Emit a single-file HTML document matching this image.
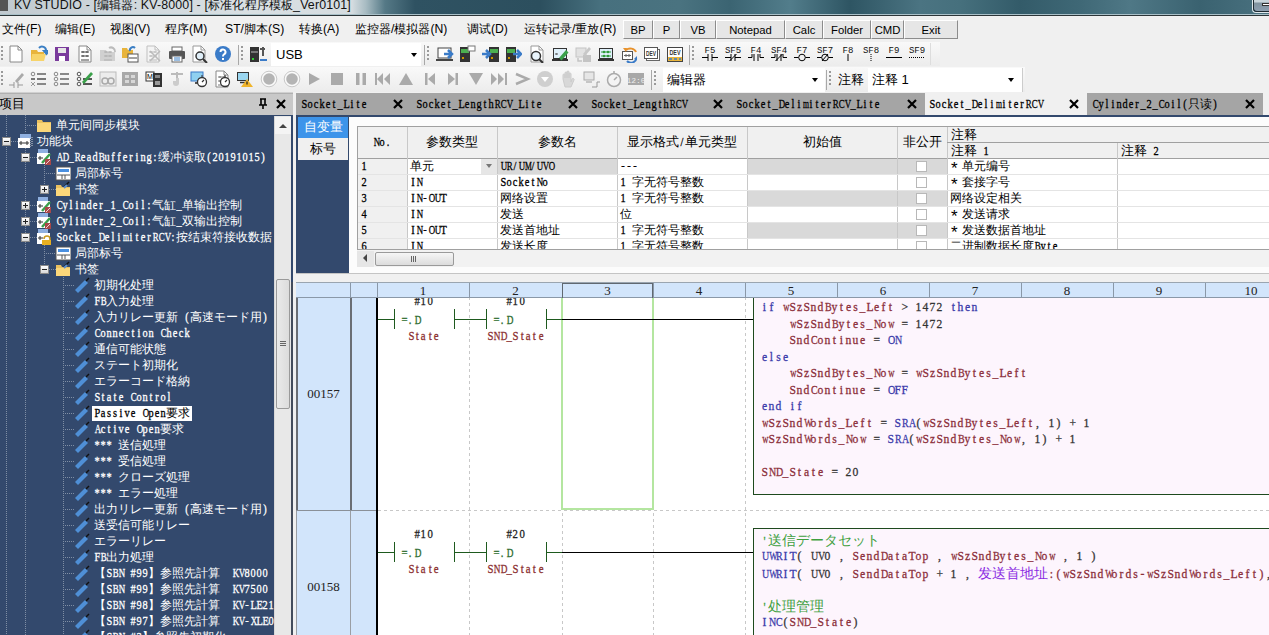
<!DOCTYPE html><html><head><meta charset="utf-8"><style>
*{box-sizing:border-box}
body{margin:0;width:1269px;height:635px;overflow:hidden;position:relative;background:#f0f0f0;font-family:"Liberation Sans",sans-serif;font-size:12px;color:#000}
.a{position:absolute}
.t{position:absolute;white-space:nowrap;line-height:1}
.m{font-family:"Liberation Mono",monospace}
.q{font-family:"Liberation Serif",serif;-webkit-text-stroke-width:0.3px}
.q i{display:inline-block;width:var(--w);text-align:center;font-style:normal;transform:scaleX(.86)}
.q i.v{transform:scaleX(.74)}
.q i.w{transform:scaleX(.64)}
</style></head><body>

<div class="a" style="left:0;top:0;width:1269px;height:15px;background:linear-gradient(90deg,#c0c9cf 0,#cfd7dc 120px,#d9e0e3 250px,#d5dce0 352px,#a7bbc2 366px,#557986 385px,#2f5262 415px,#2c4f5e 540px,#47707e 600px,#4a7380 680px,#3b6472 730px,#527d8b 790px,#2e5563 850px,#4b7482 920px,#46707d 960px,#335b69 1020px,#3f6876 1080px,#4f7886 1130px,#3a6270 1200px,#4a7280 1269px)"></div>
<div class="a" style="left:0;top:14px;width:1269px;height:1px;background:#a9c0c8"></div>
<div class="a" style="left:0;top:15px;width:1269px;height:1px;background:#2c3538"></div>
<div class="a" style="left:0;top:0;width:8px;height:11px;background:#555"></div>
<div class="t" style="left:14px;top:-1px;font-size:12.4px;letter-spacing:0.15px;color:#111">KV STUDIO - [编辑器: KV-8000] - [标准化程序模板_Ver0101]</div>
<div class="a" style="left:1252px;top:0;width:17px;height:13px;border:1px solid #dfe8ec;border-top:none;border-right:none;border-radius:0 0 0 4px"></div>
<div class="a" style="left:1253px;top:0;width:16px;height:12px;border:1px solid #1e2a30;border-top:none;border-right:none;border-radius:0 0 0 4px;background:linear-gradient(#c8d4da 0,#c8d4da 2px,#7f929e 3px,#8d9fb0 11px)"></div>
<div class="a" style="left:1262px;top:3px;width:7px;height:3px;background:#fff;border:1px solid #333;border-right:none"></div>
<div class="a" style="left:0;top:16px;width:1269px;height:26px;background:#f0f0f0"></div>
<div class="t" style="left:2px;top:23px;font-size:12.2px">文件(F)</div>
<div class="t" style="left:55px;top:23px;font-size:12.2px">编辑(E)</div>
<div class="t" style="left:110px;top:23px;font-size:12.2px">视图(V)</div>
<div class="t" style="left:165px;top:23px;font-size:12.2px">程序(M)</div>
<div class="t" style="left:225px;top:23px;font-size:12.2px">ST/脚本(S)</div>
<div class="t" style="left:299px;top:23px;font-size:12.2px">转换(A)</div>
<div class="t" style="left:355px;top:23px;font-size:12.2px">监控器/模拟器(N)</div>
<div class="t" style="left:467px;top:23px;font-size:12.2px">调试(D)</div>
<div class="t" style="left:524px;top:23px;font-size:12.2px">运转记录/重放(R)</div>
<div class="a" style="left:623px;top:20px;width:30px;height:19px;background:#e6e6e6;border:1px solid;border-color:#fff #8c8c8c #8c8c8c #fff;font-size:11.3px;text-align:center;line-height:19px">BP</div>
<div class="a" style="left:653px;top:20px;width:27px;height:19px;background:#e6e6e6;border:1px solid;border-color:#fff #8c8c8c #8c8c8c #fff;font-size:11.3px;text-align:center;line-height:19px">P</div>
<div class="a" style="left:680px;top:20px;width:36px;height:19px;background:#e6e6e6;border:1px solid;border-color:#fff #8c8c8c #8c8c8c #fff;font-size:11.3px;text-align:center;line-height:19px">VB</div>
<div class="a" style="left:716px;top:20px;width:69px;height:19px;background:#e6e6e6;border:1px solid;border-color:#fff #8c8c8c #8c8c8c #fff;font-size:11.3px;text-align:center;line-height:19px">Notepad</div>
<div class="a" style="left:785px;top:20px;width:38px;height:19px;background:#e6e6e6;border:1px solid;border-color:#fff #8c8c8c #8c8c8c #fff;font-size:11.3px;text-align:center;line-height:19px">Calc</div>
<div class="a" style="left:823px;top:20px;width:48px;height:19px;background:#e6e6e6;border:1px solid;border-color:#fff #8c8c8c #8c8c8c #fff;font-size:11.3px;text-align:center;line-height:19px">Folder</div>
<div class="a" style="left:871px;top:20px;width:33px;height:19px;background:#e6e6e6;border:1px solid;border-color:#fff #8c8c8c #8c8c8c #fff;font-size:11.3px;text-align:center;line-height:19px">CMD</div>
<div class="a" style="left:904px;top:20px;width:54px;height:19px;background:#e6e6e6;border:1px solid;border-color:#fff #8c8c8c #8c8c8c #fff;font-size:11.3px;text-align:center;line-height:19px">Exit</div>
<div class="a" style="left:0;top:42px;width:1269px;height:24px;background:#f0f0f0"></div>
<div class="a" style="left:0;top:66px;width:1269px;height:26px;background:#f0f0f0"></div>
<div class="a" style="left:0;top:42px;width:940px;height:24px;background:linear-gradient(#f9f9f9,#ececec)"></div>
<div class="a" style="left:0;top:67px;width:1025px;height:25px;background:linear-gradient(#f9f9f9,#ececec)"></div>
<div class="a" style="left:1px;top:46px;width:2px;height:16px;background:repeating-linear-gradient(#9a9a9a 0 2px,transparent 2px 4px)"></div>
<div class="a" style="left:1px;top:71px;width:2px;height:16px;background:repeating-linear-gradient(#9a9a9a 0 2px,transparent 2px 4px)"></div>
<svg class="a" style="left:7.0px;top:45.0px" width="18" height="18" viewBox="0 0 18 18"><path d="M3 1h8l4 4v12H3z" fill="#fff" stroke="#888"/><path d="M11 1v4h4" fill="none" stroke="#888"/></svg>
<svg class="a" style="left:30.0px;top:45.0px" width="18" height="18" viewBox="0 0 18 18"><path d="M1 5h6l1 2h6v9H1z" fill="#e8b43c"/><path d="M2 9h14l-2 7H1z" fill="#f7d46b"/><path d="M9 3a4 4 0 0 1 7 3l-2 0 2.5 3 2.5-3h-2" fill="none" stroke="#3b7fc4" stroke-width="2"/></svg>
<svg class="a" style="left:53.0px;top:45.0px" width="18" height="18" viewBox="0 0 18 18"><rect x="2" y="2" width="14" height="14" fill="#7a3b9c"/><rect x="5" y="3" width="8" height="5" fill="#e6e6e6"/><rect x="6" y="11" width="6" height="5" fill="#fff"/></svg>
<svg class="a" style="left:76.0px;top:45.0px" width="18" height="18" viewBox="0 0 18 18"><path d="M3 1h8l4 4v12H3z" fill="#fff" stroke="#888"/><path d="M11 1v4h4" fill="none" stroke="#888"/><path d="M5 7h8M5 11h8M5 15h8M7 6v2M11 6v2M7 10v2M11 10v2" stroke="#444" stroke-width="1" fill="none"/></svg>
<svg class="a" style="left:99.0px;top:45.0px" width="18" height="18" viewBox="0 0 18 18"><path d="M1 5h6l1 2h8v9H1z" fill="#d0d0d0"/><path d="M5 7h8M5 11h8M5 15h8M7 6v2M11 6v2M7 10v2M11 10v2" stroke="#b0b0b0" stroke-width="1" fill="none"/><path d="M10 3a4 4 0 0 1 6 4" fill="none" stroke="#bbb" stroke-width="2"/></svg>
<svg class="a" style="left:121.0px;top:45.0px" width="18" height="18" viewBox="0 0 18 18"><path d="M1 3h5l1 2h5v8H1z" fill="#e8b43c"/><rect x="7" y="9" width="10" height="8" fill="#fff" stroke="#555"/><path d="M8 13h8" stroke="#444"/><path d="M9 6a3 3 0 0 1 5-3" fill="none" stroke="#3b7fc4" stroke-width="2"/></svg>
<svg class="a" style="left:144.0px;top:45.0px" width="18" height="18" viewBox="0 0 18 18"><path d="M3 1h8l4 4v12H3z" fill="#f4f4f4" stroke="#c0c0c0"/><path d="M11 1v4h4" fill="none" stroke="#c0c0c0"/><path d="M5 7h8M5 11h8M5 15h8M7 6v2M11 6v2M7 10v2M11 10v2" stroke="#bbb" stroke-width="1" fill="none"/><path d="M6 6l10 10M16 6L6 16" stroke="#bbb" stroke-width="1.5"/></svg>
<svg class="a" style="left:168.0px;top:45.0px" width="18" height="18" viewBox="0 0 18 18"><rect x="4" y="2" width="10" height="4" fill="#fff" stroke="#666"/><rect x="1" y="6" width="16" height="8" rx="1" fill="#555"/><rect x="4" y="11" width="10" height="6" fill="#fff" stroke="#666"/><path d="M6 13h6M6 15h6" stroke="#3b7fc4"/></svg>
<svg class="a" style="left:190.0px;top:45.0px" width="18" height="18" viewBox="0 0 18 18"><path d="M3 1h8l4 4v12H3z" fill="#fff" stroke="#999"/><path d="M11 1v4h4" fill="none" stroke="#999"/><circle cx="10" cy="11" r="4" fill="#dfeef8" stroke="#333" stroke-width="1.5"/><path d="M13 14l4 4" stroke="#333" stroke-width="2"/></svg>
<svg class="a" style="left:214.0px;top:45.0px" width="18" height="18" viewBox="0 0 18 18"><circle cx="9" cy="9" r="8" fill="#3a7bc8"/><path d="M6.5 7a2.5 2.5 0 1 1 3.5 2.3c-1 .5-1 1-1 2.2" fill="none" stroke="#fff" stroke-width="2"/><rect x="8" y="13" width="2" height="2" fill="#fff"/></svg>
<div class="a" style="left:238px;top:45px;width:1px;height:20px;background:#a8a8a8"></div>
<div class="a" style="left:241px;top:46px;width:2px;height:16px;background:repeating-linear-gradient(#9a9a9a 0 2px,transparent 2px 4px)"></div>
<svg class="a" style="left:249.0px;top:45.0px" width="18" height="18" viewBox="0 0 18 18"><rect x="1" y="2" width="9" height="15" fill="#333"/><rect x="2" y="6" width="7" height="2" fill="#777"/><rect x="3" y="13" width="2" height="2" fill="#3c3"/><path d="M11 4h5M14 2v9M11 15h7" stroke="#555" stroke-width="2"/><path d="M11 15h7" stroke="#3a7bc8" stroke-width="2"/></svg>
<div class="a" style="left:271px;top:43px;width:150px;height:23px;background:#fff"></div>
<div class="t" style="left:276px;top:48px;font-size:13px">USB</div>
<div class="a" style="left:411px;top:53px;width:0;height:0;border-left:3.5px solid transparent;border-right:3.5px solid transparent;border-top:4px solid #000"></div>
<div class="a" style="left:424px;top:45px;width:1px;height:20px;background:#a8a8a8"></div>
<div class="a" style="left:427px;top:46px;width:2px;height:16px;background:repeating-linear-gradient(#9a9a9a 0 2px,transparent 2px 4px)"></div>
<svg class="a" style="left:436.0px;top:45.0px" width="18" height="18" viewBox="0 0 18 18"><rect x="2" y="3" width="13" height="10" fill="#fff" stroke="#444"/><path d="M0 15h17" stroke="#444" stroke-width="2"/><path d="M8 9h6M12 5l4 4-4 4" fill="none" stroke="#3a7bc8" stroke-width="2.5"/></svg>
<svg class="a" style="left:458.0px;top:45.0px" width="18" height="18" viewBox="0 0 18 18"><rect x="2" y="2" width="10" height="15" fill="#333"/><rect x="3" y="4" width="8" height="4" fill="#4caf50"/><rect x="4" y="12" width="2" height="2" fill="#c90"/><rect x="10" y="1" width="7" height="5" fill="#fff" stroke="#777"/></svg>
<svg class="a" style="left:482.0px;top:45.0px" width="18" height="18" viewBox="0 0 18 18"><rect x="7" y="2" width="10" height="15" fill="#333"/><rect x="8" y="4" width="8" height="4" fill="#4caf50"/><rect x="9" y="12" width="2" height="2" fill="#c90"/><path d="M0 9h6M4 5l4 4-4 4" fill="none" stroke="#3a7bc8" stroke-width="2.5"/></svg>
<svg class="a" style="left:504.0px;top:45.0px" width="18" height="18" viewBox="0 0 18 18"><rect x="2" y="2" width="10" height="15" fill="#333"/><rect x="3" y="4" width="8" height="4" fill="#4caf50"/><rect x="4" y="12" width="2" height="2" fill="#c90"/><path d="M9 9h6M13 5l4 4-4 4" fill="none" stroke="#3a7bc8" stroke-width="2.5"/></svg>
<svg class="a" style="left:528.0px;top:45.0px" width="18" height="18" viewBox="0 0 18 18"><path d="M3 1h8l4 4v12H3z" fill="#fff" stroke="#999"/><path d="M11 1v4h4" fill="none" stroke="#999"/><circle cx="8" cy="11" r="4.5" fill="#e9f4fb" stroke="#333" stroke-width="1.5"/><path d="M11 14l4 4" stroke="#333" stroke-width="2"/></svg>
<svg class="a" style="left:551.0px;top:45.0px" width="18" height="18" viewBox="0 0 18 18"><rect x="2.5" y="3.5" width="13" height="10" fill="#dff0fa" stroke="#333"/><rect x="1" y="14" width="16" height="2" fill="#333"/><path d="M5 9h2M5 8v2" stroke="#555"/><path d="M8 13l7-8 2.5 2.5-7 8z" fill="#3aa04a"/><path d="M8 13l-1 2 2-1z" fill="#222"/></svg>
<svg class="a" style="left:574.0px;top:45.0px" width="18" height="18" viewBox="0 0 18 18"><rect x="2" y="3" width="10" height="9" fill="#e2e2e2" stroke="#c4c4c4"/><path d="M4 13v3h4" fill="none" stroke="#c4c4c4" stroke-width="1.5"/><rect x="9" y="10" width="8" height="7" fill="#c4c4c4"/><path d="M9 9l6-7 2 2-6 7z" fill="#c8c8c8"/></svg>
<svg class="a" style="left:597.0px;top:45.0px" width="18" height="18" viewBox="0 0 18 18"><rect x="2.5" y="3.5" width="13" height="10" fill="#dff0fa" stroke="#333"/><rect x="1" y="14" width="16" height="2" fill="#333"/><path d="M4 7h10M4 11h10" stroke="#2e9a3a" stroke-width="1.2"/><circle cx="7" cy="7" r="1.3" fill="#2e9a3a"/><circle cx="11" cy="7" r="1.3" fill="#2e9a3a"/><circle cx="7" cy="11" r="1.3" fill="#2e9a3a"/><circle cx="11" cy="11" r="1.3" fill="#2e9a3a"/></svg>
<svg class="a" style="left:620.0px;top:45.0px" width="18" height="18" viewBox="0 0 18 18"><rect x="2.5" y="6.5" width="10" height="8" fill="#fff" stroke="#555"/><path d="M4 10.5h7M6 9v3M9 9v3" stroke="#666"/><path d="M6 5a6 5 0 0 1 10 2" fill="none" stroke="#e8922c" stroke-width="2"/><path d="M3 3l4 0-1 4z" fill="#e8922c"/><path d="M7 16a5 4 0 0 0 9-3" fill="none" stroke="#3a7bc8" stroke-width="2"/><path d="M17 11l-3 3 3 1z" fill="#3a7bc8"/></svg>
<svg class="a" style="left:643.0px;top:45.0px" width="18" height="18" viewBox="0 0 18 18"><rect x="3.5" y="4.5" width="13" height="11" fill="#fff" stroke="#666"/><rect x="1.5" y="2.5" width="13" height="11" fill="#fff" stroke="#555"/><text x="8" y="10.5" font-size="6.5" text-anchor="middle" textLength="10" lengthAdjust="spacingAndGlyphs" font-family="Liberation Sans" font-weight="bold" fill="#333">DEV</text></svg>
<svg class="a" style="left:666.0px;top:45.0px" width="18" height="18" viewBox="0 0 18 18"><rect x="1.5" y="2.5" width="15" height="14" fill="#fff" stroke="#444"/><rect x="2" y="12" width="14" height="4" fill="#e8b43c"/><path d="M3 14h3M8 14h3M13 14h2" stroke="#3a7bc8" stroke-width="1.5"/><text x="9" y="9.5" font-size="6.5" text-anchor="middle" textLength="11" lengthAdjust="spacingAndGlyphs" font-family="Liberation Sans" font-weight="bold" fill="#333">DEV</text></svg>
<div class="a" style="left:689px;top:45px;width:1px;height:20px;background:#a8a8a8"></div>
<div class="a" style="left:692px;top:46px;width:2px;height:16px;background:repeating-linear-gradient(#9a9a9a 0 2px,transparent 2px 4px)"></div>
<svg class="a" style="left:701.0px;top:45.0px" width="18" height="20" viewBox="0 0 18 20"><text x="9" y="8" font-size="9" text-anchor="middle" font-family="Liberation Mono" fill="#111">F5</text><path d="M1 12.5h6M7 9v7M11 9v7M11 12.5h6" stroke="#000"/></svg>
<svg class="a" style="left:724.0px;top:45.0px" width="18" height="20" viewBox="0 0 18 20"><text x="9" y="8" font-size="9" text-anchor="middle" font-family="Liberation Mono" fill="#111">SF5</text><path d="M1 12.5h6M7 9v7M11 9v7M11 12.5h6M5.5 16l7-7" stroke="#000"/></svg>
<svg class="a" style="left:747.0px;top:45.0px" width="18" height="20" viewBox="0 0 18 20"><text x="9" y="8" font-size="9" text-anchor="middle" font-family="Liberation Mono" fill="#111">F4</text><path d="M1 12.5h4M5 9v3.5M7 9v7M11 9v7M13 9v3.5M13 12.5h4" stroke="#000"/></svg>
<svg class="a" style="left:770.0px;top:45.0px" width="18" height="20" viewBox="0 0 18 20"><text x="9" y="8" font-size="9" text-anchor="middle" font-family="Liberation Mono" fill="#111">SF4</text><path d="M1 12.5h4M5 9v3.5M7 9v7M11 9v7M13 9v3.5M13 12.5h4M5.5 16l7-7" stroke="#000"/></svg>
<svg class="a" style="left:793.0px;top:45.0px" width="18" height="20" viewBox="0 0 18 20"><text x="9" y="8" font-size="9" text-anchor="middle" font-family="Liberation Mono" fill="#111">F7</text><path d="M1 12.5h4.5M12.5 12.5h4.5" stroke="#000"/><circle cx="9" cy="12.5" r="3.3" fill="none" stroke="#000"/></svg>
<svg class="a" style="left:816.0px;top:45.0px" width="18" height="20" viewBox="0 0 18 20"><text x="9" y="8" font-size="9" text-anchor="middle" font-family="Liberation Mono" fill="#111">SF7</text><path d="M1 12.5h4.5M12.5 12.5h4.5M6 16l6-7" stroke="#000"/><circle cx="9" cy="12.5" r="3.3" fill="none" stroke="#000"/></svg>
<svg class="a" style="left:839.0px;top:45.0px" width="18" height="20" viewBox="0 0 18 20"><text x="9" y="8" font-size="9" text-anchor="middle" font-family="Liberation Mono" fill="#111">F8</text><path d="M9 9v7" stroke="#000"/></svg>
<svg class="a" style="left:862.0px;top:45.0px" width="18" height="20" viewBox="0 0 18 20"><text x="9" y="8" font-size="9" text-anchor="middle" font-family="Liberation Mono" fill="#111">SF8</text><path d="M9 9v7" stroke="#000" stroke-dasharray="1 1"/></svg>
<svg class="a" style="left:885.0px;top:45.0px" width="18" height="20" viewBox="0 0 18 20"><text x="9" y="8" font-size="9" text-anchor="middle" font-family="Liberation Mono" fill="#111">F9</text><path d="M1 12.5h16" stroke="#000"/></svg>
<svg class="a" style="left:908.0px;top:45.0px" width="18" height="20" viewBox="0 0 18 20"><text x="9" y="8" font-size="9" text-anchor="middle" font-family="Liberation Mono" fill="#111">SF9</text><path d="M1 12.5h16" stroke="#000" stroke-dasharray="1 1"/></svg>
<div class="a" style="left:930px;top:43px;width:1px;height:22px;background:#ddd"></div>
<svg class="a" style="left:7.0px;top:70.0px" width="18" height="18" viewBox="0 0 18 18"><path d="M2 15h5M7 12v6M11 12v6M11 15h5" stroke="#999"/><path d="M8 11l7-8 2 2-7 8z" fill="#aaa"/></svg>
<svg class="a" style="left:30.0px;top:70.0px" width="18" height="18" viewBox="0 0 18 18"><circle cx="3" cy="4" r="1.8" fill="none" stroke="#888"/><path d="M7 4h9" stroke="#888" stroke-width="2"/><path d="M1 9h4M7 9h9" stroke="#777" stroke-width="2"/><path d="M1 12l4 4M5 12l-4 4" stroke="#999"/><path d="M7 14h9" stroke="#888" stroke-width="2"/></svg>
<svg class="a" style="left:53.0px;top:70.0px" width="18" height="18" viewBox="0 0 18 18"><circle cx="3" cy="4" r="1.8" fill="none" stroke="#888"/><path d="M7 4h9" stroke="#888" stroke-width="2"/><circle cx="3" cy="9" r="1.8" fill="none" stroke="#888"/><path d="M7 9h9" stroke="#888" stroke-width="2"/><circle cx="3" cy="14" r="1.8" fill="none" stroke="#888"/><path d="M7 14h9" stroke="#888" stroke-width="2"/></svg>
<svg class="a" style="left:76.0px;top:70.0px" width="18" height="18" viewBox="0 0 18 18"><circle cx="3" cy="4" r="1.8" fill="none" stroke="#555"/><circle cx="3" cy="9" r="1.8" fill="none" stroke="#555"/><circle cx="3" cy="14" r="1.8" fill="none" stroke="#555"/><path d="M7 9h9M7 14h9" stroke="#555" stroke-width="2"/><path d="M6 12l9-10 2 2-9 10z" fill="#3aa04a"/></svg>
<svg class="a" style="left:99.0px;top:70.0px" width="18" height="18" viewBox="0 0 18 18"><rect x="1" y="2" width="16" height="14" fill="#ececec" stroke="#bbb"/><circle cx="6" cy="11" r="3" fill="none" stroke="#aaa" stroke-width="1.5"/><circle cx="12" cy="11" r="3" fill="none" stroke="#aaa" stroke-width="1.5"/></svg>
<svg class="a" style="left:121.0px;top:70.0px" width="18" height="18" viewBox="0 0 18 18"><rect x="1" y="2" width="16" height="14" fill="#a8a8a8"/><path d="M4 5h4v3H4zM10 5h4v3h-4zM4 10h4v3H4zM10 10h4v3h-4z" fill="#d8d8d8"/></svg>
<svg class="a" style="left:145.0px;top:70.0px" width="18" height="18" viewBox="0 0 18 18"><rect x="1" y="2" width="8" height="9" fill="#fff" stroke="#333"/><text x="5" y="9" font-size="7" text-anchor="middle" font-family="Liberation Sans">M</text><rect x="8" y="3" width="9" height="14" fill="#333"/><rect x="10" y="5" width="5" height="3" fill="#888"/><rect x="10" y="11" width="5" height="4" fill="#999"/></svg>
<svg class="a" style="left:168.0px;top:70.0px" width="18" height="18" viewBox="0 0 18 18"><path d="M3 4h12M9 2v6" stroke="#bbb" stroke-width="2"/><path d="M8 8h3v5a3 3 0 0 1-6 0v-2h3z" fill="#ccc"/></svg>
<svg class="a" style="left:190.0px;top:70.0px" width="18" height="18" viewBox="0 0 18 18"><rect x="1" y="2" width="12" height="9" fill="#8fd0f0" stroke="#3a7bc8"/><path d="M5 13h5" stroke="#555" stroke-width="2"/><circle cx="12" cy="12" r="4.5" fill="#fff" stroke="#333" stroke-width="1.3"/><path d="M12 12l2-2M11 6h2" stroke="#333" stroke-width="1.2"/></svg>
<svg class="a" style="left:213.0px;top:70.0px" width="18" height="18" viewBox="0 0 18 18"><path d="M3 1h8l4 4v12H3z" fill="#fff" stroke="#888"/><path d="M11 1v4h4" fill="none" stroke="#888"/><path d="M5 7h8M5 11h8M5 15h8M7 6v2M11 6v2M7 10v2M11 10v2" stroke="#777" stroke-width="1" fill="none"/><circle cx="12" cy="12" r="4.5" fill="#fff" stroke="#333" stroke-width="1.3"/><path d="M12 12l2-2M11 6h2" stroke="#333" stroke-width="1.2"/></svg>
<svg class="a" style="left:236.0px;top:70.0px" width="18" height="18" viewBox="0 0 18 18"><rect x="1.5" y="2.5" width="11" height="8" fill="#9ad6f0" stroke="#333"/><path d="M4 12.5h6" stroke="#333" stroke-width="1.5"/><path d="M11 9l6 8H5z" fill="#f0b429"/><path d="M11 11.5v3" stroke="#222" stroke-width="1.2"/></svg>
<svg class="a" style="left:260.0px;top:70.0px" width="18" height="18" viewBox="0 0 18 18"><circle cx="9" cy="9" r="7.8" fill="#fafafa" stroke="#c8c8c8" stroke-width="1"/><circle cx="9" cy="9" r="5.8" fill="#b4b4b4"/></svg>
<svg class="a" style="left:283.0px;top:70.0px" width="18" height="18" viewBox="0 0 18 18"><circle cx="9" cy="9" r="7.8" fill="#fafafa" stroke="#c8c8c8" stroke-width="1"/><circle cx="9" cy="9" r="5.8" fill="#b4b4b4"/></svg>
<svg class="a" style="left:305.0px;top:70.0px" width="18" height="18" viewBox="0 0 18 18"><path d="M4 3l11 6-11 6z" fill="#aaa"/></svg>
<svg class="a" style="left:328.0px;top:70.0px" width="18" height="18" viewBox="0 0 18 18"><rect x="3" y="3" width="12" height="12" fill="#aaa"/></svg>
<svg class="a" style="left:352.0px;top:70.0px" width="18" height="18" viewBox="0 0 18 18"><rect x="4" y="3" width="3.5" height="12" fill="#aaa"/><rect x="10.5" y="3" width="3.5" height="12" fill="#aaa"/></svg>
<svg class="a" style="left:374.0px;top:70.0px" width="18" height="18" viewBox="0 0 18 18"><rect x="1" y="3" width="2" height="12" fill="#aaa"/><path d="M9 3L3 9l6 6zM16 3l-6 6 6 6z" fill="#aaa"/></svg>
<svg class="a" style="left:397.0px;top:70.0px" width="18" height="18" viewBox="0 0 18 18"><path d="M9 3l7 12H2z" fill="#aaa"/></svg>
<svg class="a" style="left:421.0px;top:70.0px" width="18" height="18" viewBox="0 0 18 18"><rect x="4" y="3" width="2.5" height="12" fill="#aaa"/><path d="M14 3L7 9l7 6z" fill="#aaa"/></svg>
<svg class="a" style="left:444.0px;top:70.0px" width="18" height="18" viewBox="0 0 18 18"><rect x="11.5" y="3" width="2.5" height="12" fill="#aaa"/><path d="M4 3l7 6-7 6z" fill="#aaa"/></svg>
<svg class="a" style="left:467.0px;top:70.0px" width="18" height="18" viewBox="0 0 18 18"><path d="M2 3h14L9 15z" fill="#aaa"/></svg>
<svg class="a" style="left:490.0px;top:70.0px" width="18" height="18" viewBox="0 0 18 18"><rect x="15" y="3" width="2" height="12" fill="#aaa"/><path d="M1 3l6 6-6 6zM8 3l6 6-6 6z" fill="#aaa"/></svg>
<svg class="a" style="left:513.0px;top:70.0px" width="18" height="18" viewBox="0 0 18 18"><path d="M3 4l12 5-12 5" fill="none" stroke="#aaa" stroke-width="2.5"/></svg>
<svg class="a" style="left:536.0px;top:70.0px" width="18" height="18" viewBox="0 0 18 18"><circle cx="9" cy="9" r="8" fill="#cfcfcf"/><path d="M5 7h8l-4 5z" fill="#fff"/></svg>
<svg class="a" style="left:559.0px;top:70.0px" width="18" height="18" viewBox="0 0 18 18"><path d="M4 9V5a1 1 0 0 1 2 0v3V3a1 1 0 0 1 2 0v5V2a1 1 0 0 1 2 0v6V4a1 1 0 0 1 2 0v8l1-3a1 1 0 0 1 2 1l-3 7H6z" fill="#d8d8d8" stroke="#ccc"/></svg>
<svg class="a" style="left:582.0px;top:70.0px" width="18" height="18" viewBox="0 0 18 18"><rect x="2" y="2" width="10" height="8" fill="#e6e6e6" stroke="#aaa"/><path d="M4 12h6M10 17h5v-5h3" stroke="#999" fill="none"/></svg>
<svg class="a" style="left:605.0px;top:70.0px" width="18" height="18" viewBox="0 0 18 18"><circle cx="9" cy="10" r="6.5" fill="#f4f4f4" stroke="#aaa" stroke-width="1.5"/><path d="M9 10l3-3M8 2h2" stroke="#aaa" stroke-width="1.5"/></svg>
<svg class="a" style="left:627.0px;top:70.0px" width="18" height="18" viewBox="0 0 18 18"><rect x="1" y="3" width="16" height="12" fill="#a8a8a8"/><text x="9" y="12.5" font-size="8" text-anchor="middle" fill="#eee" font-family="Liberation Mono">12:0</text></svg>
<div class="a" style="left:651px;top:70px;width:1px;height:20px;background:#a8a8a8"></div>
<div class="a" style="left:654px;top:71px;width:2px;height:16px;background:repeating-linear-gradient(#9a9a9a 0 2px,transparent 2px 4px)"></div>
<div class="a" style="left:663px;top:68px;width:162px;height:24px;background:#fff"></div>
<div class="t" style="left:667px;top:73px;font-size:13px">编辑器</div>
<div class="a" style="left:812px;top:78px;width:0;height:0;border-left:3.5px solid transparent;border-right:3.5px solid transparent;border-top:4px solid #000"></div>
<div class="a" style="left:826px;top:70px;width:1px;height:20px;background:#a8a8a8"></div>
<div class="a" style="left:829px;top:71px;width:2px;height:16px;background:repeating-linear-gradient(#9a9a9a 0 2px,transparent 2px 4px)"></div>
<div class="t" style="left:838px;top:73px;font-size:13px">注释</div>
<div class="a" style="left:868px;top:68px;width:154px;height:24px;background:#fff"></div>
<div class="t" style="left:872px;top:73px;font-size:13px">注释 1</div>
<div class="a" style="left:1008px;top:78px;width:0;height:0;border-left:3.5px solid transparent;border-right:3.5px solid transparent;border-top:4px solid #000"></div>
<div class="a" style="left:1022px;top:68px;width:1px;height:24px;background:#ccc"></div>
<div class="a" style="left:0;top:92px;width:293px;height:1px;background:#d0d0d0"></div>
<div class="a" style="left:0;top:93px;width:293px;height:22px;background:#c8c8c8;border-top:1px solid #b0b0b0"></div>
<div class="t" style="left:-1px;top:98px;font-size:12.5px">项目</div>
<svg class="a" style="left:257.0px;top:97.0px" width="12" height="14" viewBox="0 0 12 14"><path d="M3 2h6M4 2v6M8 2v6M2 8h8M6 8v4" stroke="#000" stroke-width="1.6" fill="none"/></svg>
<svg class="a" style="left:275.0px;top:98.0px" width="12" height="12" viewBox="0 0 12 12"><path d="M2 2l8 8M10 2l-8 8" stroke="#000" stroke-width="2.2"/></svg>
<div class="a" style="left:0;top:115px;width:293px;height:520px;background:#33496d;overflow:hidden">
<div class="a" style="left:6px;top:0px;width:1px;height:520px;background:repeating-linear-gradient(#7f8ea4 0 1px,transparent 1px 2px)"></div>
<div class="a" style="left:25px;top:0px;width:1px;height:18px;background:repeating-linear-gradient(#7f8ea4 0 1px,transparent 1px 2px)"></div>
<div class="a" style="left:25px;top:31px;width:1px;height:489px;background:repeating-linear-gradient(#7f8ea4 0 1px,transparent 1px 2px)"></div>
<div class="a" style="left:44px;top:48px;width:1px;height:27px;background:repeating-linear-gradient(#7f8ea4 0 1px,transparent 1px 2px)"></div>
<div class="a" style="left:44px;top:128px;width:1px;height:27px;background:repeating-linear-gradient(#7f8ea4 0 1px,transparent 1px 2px)"></div>
<div class="a" style="left:63px;top:160px;width:1px;height:360px;background:repeating-linear-gradient(#7f8ea4 0 1px,transparent 1px 2px)"></div>
<div class="a" style="left:25px;top:10px;width:12px;height:1px;background:repeating-linear-gradient(90deg,#7f8ea4 0 1px,transparent 1px 2px)"></div>
<svg class="a" style="left:36px;top:2px" width="16" height="16" viewBox="0 0 16 16"><path d="M1 3h5l1 2h8v10H1z" fill="#e9c060"/><path d="M1 6h14v9H1z" fill="#fbd77a"/></svg>
<div class="t" style="left:56px;top:3px;height:15px;line-height:15px;color:#fff;"><span style="font-size:12px">单元间同步模块</span></div>
<div class="a" style="left:11px;top:26px;width:7px;height:1px;background:repeating-linear-gradient(90deg,#7f8ea4 0 1px,transparent 1px 2px)"></div>
<div class="a" style="left:2.0px;top:21.5px;width:9px;height:9px;background:linear-gradient(#fff,#d8d8d8);border:1px solid #8a8a8a"></div>
<div class="a" style="left:4.0px;top:25.5px;width:5px;height:1px;background:#222"></div>
<svg class="a" style="left:17px;top:18px" width="16" height="16" viewBox="0 0 16 16"><rect x="3" y="1" width="11" height="5" fill="#8fb0e0"/><rect x="1" y="5" width="12" height="10" fill="#fff"/><path d="M2 10h10M4 8v4M10 8v4" stroke="#333"/><path d="M13 5v10M15 4v10" stroke="#ddd" stroke-dasharray="1 1"/></svg>
<div class="t" style="left:37px;top:19px;height:15px;line-height:15px;color:#fff;"><span style="font-size:12px">功能块</span></div>
<div class="a" style="left:30px;top:42px;width:7px;height:1px;background:repeating-linear-gradient(90deg,#7f8ea4 0 1px,transparent 1px 2px)"></div>
<div class="a" style="left:21.0px;top:37.5px;width:9px;height:9px;background:linear-gradient(#fff,#d8d8d8);border:1px solid #8a8a8a"></div>
<div class="a" style="left:23.0px;top:41.5px;width:5px;height:1px;background:#222"></div>
<svg class="a" style="left:36px;top:34px" width="16" height="16" viewBox="0 0 16 16"><rect x="2" y="0" width="10" height="5" fill="#8fb0e0"/><rect x="1" y="4" width="13" height="11" fill="#fff"/><path d="M2 9h5M4 7v4" stroke="#333"/><path d="M6 14l8-9" stroke="#3aa04a" stroke-width="2.5"/><rect x="9" y="10" width="6" height="6" fill="#a84848"/><path d="M10 15l4-4" stroke="#f0d0d0"/></svg>
<div class="t" style="left:56px;top:35px;height:15px;line-height:15px;color:#fff;"><span class="q" style="font-size:12px;--w:6.0px"><i class="v">A</i><i class="v">D</i><i>_</i><i class="v">R</i><i>e</i><i>a</i><i>d</i><i class="v">B</i><i>u</i><i>f</i><i>f</i><i>e</i><i>r</i><i>i</i><i>n</i><i>g</i><i>:</i></span><span style="font-size:12px">缓冲读取</span><span class="q" style="font-size:12px;--w:6.0px"><i>(</i><i>2</i><i>0</i><i>1</i><i>9</i><i>1</i><i>0</i><i>1</i><i>5</i><i>)</i></span></div>
<div class="a" style="left:44px;top:58px;width:12px;height:1px;background:repeating-linear-gradient(90deg,#7f8ea4 0 1px,transparent 1px 2px)"></div>
<svg class="a" style="left:55px;top:50px" width="16" height="16" viewBox="0 0 16 16"><rect x="1" y="2" width="15" height="13" fill="#fff" stroke="#555"/><rect x="3" y="4" width="11" height="3" fill="#4a90e0"/><path d="M2 10h13M7 10v4M10 10v4" stroke="#555"/></svg>
<div class="t" style="left:75px;top:51px;height:15px;line-height:15px;color:#fff;"><span style="font-size:12px">局部标号</span></div>
<div class="a" style="left:49px;top:74px;width:7px;height:1px;background:repeating-linear-gradient(90deg,#7f8ea4 0 1px,transparent 1px 2px)"></div>
<div class="a" style="left:40.0px;top:69.5px;width:9px;height:9px;background:linear-gradient(#fff,#d8d8d8);border:1px solid #8a8a8a"></div>
<div class="a" style="left:42.0px;top:73.5px;width:5px;height:1px;background:#222"></div>
<div class="a" style="left:44.0px;top:71.5px;width:1px;height:5px;background:#222"></div>
<svg class="a" style="left:55px;top:66px" width="16" height="16" viewBox="0 0 16 16"><path d="M1 4h5l1 2h8v9H1z" fill="#e9c060"/><path d="M1 7h14v8H1z" fill="#fbd77a"/><path d="M9 6l5-5" stroke="#111" stroke-width="1.5"/><path d="M9 7l3-3" stroke="#5b8fd0" stroke-width="2"/></svg>
<div class="t" style="left:75px;top:67px;height:15px;line-height:15px;color:#fff;"><span style="font-size:12px">书签</span></div>
<div class="a" style="left:30px;top:90px;width:7px;height:1px;background:repeating-linear-gradient(90deg,#7f8ea4 0 1px,transparent 1px 2px)"></div>
<div class="a" style="left:21.0px;top:85.5px;width:9px;height:9px;background:linear-gradient(#fff,#d8d8d8);border:1px solid #8a8a8a"></div>
<div class="a" style="left:23.0px;top:89.5px;width:5px;height:1px;background:#222"></div>
<div class="a" style="left:25.0px;top:87.5px;width:1px;height:5px;background:#222"></div>
<svg class="a" style="left:36px;top:82px" width="16" height="16" viewBox="0 0 16 16"><rect x="2" y="0" width="10" height="5" fill="#8fb0e0"/><rect x="1" y="4" width="13" height="11" fill="#fff"/><path d="M2 9h5M4 7v4" stroke="#333"/><path d="M6 14l8-9" stroke="#3aa04a" stroke-width="2.5"/><rect x="9" y="10" width="6" height="6" fill="#a84848"/><path d="M10 15l4-4" stroke="#f0d0d0"/></svg>
<div class="t" style="left:56px;top:83px;height:15px;line-height:15px;color:#fff;"><span class="q" style="font-size:12px;--w:6.0px"><i class="v">C</i><i>y</i><i>l</i><i>i</i><i>n</i><i>d</i><i>e</i><i>r</i><i>_</i><i>1</i><i>_</i><i class="v">C</i><i>o</i><i>i</i><i>l</i><i>:</i></span><span style="font-size:12px">气缸</span><span class="q" style="font-size:12px;--w:6.0px"><i>_</i></span><span style="font-size:12px">单输出控制</span></div>
<div class="a" style="left:30px;top:106px;width:7px;height:1px;background:repeating-linear-gradient(90deg,#7f8ea4 0 1px,transparent 1px 2px)"></div>
<div class="a" style="left:21.0px;top:101.5px;width:9px;height:9px;background:linear-gradient(#fff,#d8d8d8);border:1px solid #8a8a8a"></div>
<div class="a" style="left:23.0px;top:105.5px;width:5px;height:1px;background:#222"></div>
<div class="a" style="left:25.0px;top:103.5px;width:1px;height:5px;background:#222"></div>
<svg class="a" style="left:36px;top:98px" width="16" height="16" viewBox="0 0 16 16"><rect x="2" y="0" width="10" height="5" fill="#8fb0e0"/><rect x="1" y="4" width="13" height="11" fill="#fff"/><path d="M2 9h5M4 7v4" stroke="#333"/><path d="M6 14l8-9" stroke="#3aa04a" stroke-width="2.5"/><rect x="9" y="10" width="6" height="6" fill="#a84848"/><path d="M10 15l4-4" stroke="#f0d0d0"/></svg>
<div class="t" style="left:56px;top:99px;height:15px;line-height:15px;color:#fff;"><span class="q" style="font-size:12px;--w:6.0px"><i class="v">C</i><i>y</i><i>l</i><i>i</i><i>n</i><i>d</i><i>e</i><i>r</i><i>_</i><i>2</i><i>_</i><i class="v">C</i><i>o</i><i>i</i><i>l</i><i>:</i></span><span style="font-size:12px">气缸</span><span class="q" style="font-size:12px;--w:6.0px"><i>_</i></span><span style="font-size:12px">双输出控制</span></div>
<div class="a" style="left:30px;top:122px;width:7px;height:1px;background:repeating-linear-gradient(90deg,#7f8ea4 0 1px,transparent 1px 2px)"></div>
<div class="a" style="left:21.0px;top:117.5px;width:9px;height:9px;background:linear-gradient(#fff,#d8d8d8);border:1px solid #8a8a8a"></div>
<div class="a" style="left:23.0px;top:121.5px;width:5px;height:1px;background:#222"></div>
<svg class="a" style="left:36px;top:114px" width="16" height="16" viewBox="0 0 16 16"><rect x="2" y="0" width="10" height="5" fill="#8fb0e0"/><rect x="1" y="4" width="13" height="11" fill="#fff"/><path d="M2 9h5M4 7v4" stroke="#333"/><path d="M8 10a3 3 0 0 1 6 0v2" fill="none" stroke="#c89a20" stroke-width="1.5"/><rect x="6" y="11" width="9" height="5" fill="#e8b020"/></svg>
<div class="t" style="left:56px;top:115px;height:15px;line-height:15px;color:#fff;"><span class="q" style="font-size:12px;--w:6.0px"><i>S</i><i>o</i><i>c</i><i>k</i><i>e</i><i>t</i><i>_</i><i class="v">D</i><i>e</i><i>l</i><i>i</i><i class="w">m</i><i>i</i><i>t</i><i>e</i><i>r</i><i class="v">R</i><i class="v">C</i><i class="v">V</i><i>:</i></span><span style="font-size:12px">按结束符接收数据</span></div>
<div class="a" style="left:44px;top:138px;width:12px;height:1px;background:repeating-linear-gradient(90deg,#7f8ea4 0 1px,transparent 1px 2px)"></div>
<svg class="a" style="left:55px;top:130px" width="16" height="16" viewBox="0 0 16 16"><rect x="1" y="2" width="15" height="13" fill="#fff" stroke="#555"/><rect x="3" y="4" width="11" height="3" fill="#4a90e0"/><path d="M2 10h13M7 10v4M10 10v4" stroke="#555"/></svg>
<div class="t" style="left:75px;top:131px;height:15px;line-height:15px;color:#fff;"><span style="font-size:12px">局部标号</span></div>
<div class="a" style="left:49px;top:154px;width:7px;height:1px;background:repeating-linear-gradient(90deg,#7f8ea4 0 1px,transparent 1px 2px)"></div>
<div class="a" style="left:40.0px;top:149.5px;width:9px;height:9px;background:linear-gradient(#fff,#d8d8d8);border:1px solid #8a8a8a"></div>
<div class="a" style="left:42.0px;top:153.5px;width:5px;height:1px;background:#222"></div>
<svg class="a" style="left:55px;top:146px" width="16" height="16" viewBox="0 0 16 16"><path d="M1 4h5l1 2h8v9H1z" fill="#e9c060"/><path d="M1 7h14v8H1z" fill="#fbd77a"/><path d="M9 6l5-5" stroke="#111" stroke-width="1.5"/><path d="M9 7l3-3" stroke="#5b8fd0" stroke-width="2"/></svg>
<div class="t" style="left:75px;top:147px;height:15px;line-height:15px;color:#fff;"><span style="font-size:12px">书签</span></div>
<div class="a" style="left:63px;top:170px;width:12px;height:1px;background:repeating-linear-gradient(90deg,#7f8ea4 0 1px,transparent 1px 2px)"></div>
<svg class="a" style="left:74px;top:162px" width="16" height="16" viewBox="0 0 16 16"><path d="M1 13l10-10 3 3-10 10z" fill="#4f8fd6"/><path d="M12 4l3-3" stroke="#111" stroke-width="1.5"/></svg>
<div class="t" style="left:94px;top:163px;height:15px;line-height:15px;color:#fff;"><span style="font-size:12px">初期化处理</span></div>
<div class="a" style="left:63px;top:186px;width:12px;height:1px;background:repeating-linear-gradient(90deg,#7f8ea4 0 1px,transparent 1px 2px)"></div>
<svg class="a" style="left:74px;top:178px" width="16" height="16" viewBox="0 0 16 16"><path d="M1 13l10-10 3 3-10 10z" fill="#4f8fd6"/><path d="M12 4l3-3" stroke="#111" stroke-width="1.5"/></svg>
<div class="t" style="left:94px;top:179px;height:15px;line-height:15px;color:#fff;"><span class="q" style="font-size:12px;--w:6.0px"><i>F</i><i class="v">B</i></span><span style="font-size:12px">入力处理</span></div>
<div class="a" style="left:63px;top:202px;width:12px;height:1px;background:repeating-linear-gradient(90deg,#7f8ea4 0 1px,transparent 1px 2px)"></div>
<svg class="a" style="left:74px;top:194px" width="16" height="16" viewBox="0 0 16 16"><path d="M1 13l10-10 3 3-10 10z" fill="#4f8fd6"/><path d="M12 4l3-3" stroke="#111" stroke-width="1.5"/></svg>
<div class="t" style="left:94px;top:195px;height:15px;line-height:15px;color:#fff;"><span style="font-size:12px">入力リレー更新</span><span class="q" style="font-size:12px;--w:6.0px"><i>&nbsp;</i><i>(</i></span><span style="font-size:12px">高速モード用</span><span class="q" style="font-size:12px;--w:6.0px"><i>)</i></span></div>
<div class="a" style="left:63px;top:218px;width:12px;height:1px;background:repeating-linear-gradient(90deg,#7f8ea4 0 1px,transparent 1px 2px)"></div>
<svg class="a" style="left:74px;top:210px" width="16" height="16" viewBox="0 0 16 16"><path d="M1 13l10-10 3 3-10 10z" fill="#4f8fd6"/><path d="M12 4l3-3" stroke="#111" stroke-width="1.5"/></svg>
<div class="t" style="left:94px;top:211px;height:15px;line-height:15px;color:#fff;"><span class="q" style="font-size:12px;--w:6.0px"><i class="v">C</i><i>o</i><i>n</i><i>n</i><i>e</i><i>c</i><i>t</i><i>i</i><i>o</i><i>n</i><i>&nbsp;</i><i class="v">C</i><i>h</i><i>e</i><i>c</i><i>k</i></span></div>
<div class="a" style="left:63px;top:234px;width:12px;height:1px;background:repeating-linear-gradient(90deg,#7f8ea4 0 1px,transparent 1px 2px)"></div>
<svg class="a" style="left:74px;top:226px" width="16" height="16" viewBox="0 0 16 16"><path d="M1 13l10-10 3 3-10 10z" fill="#4f8fd6"/><path d="M12 4l3-3" stroke="#111" stroke-width="1.5"/></svg>
<div class="t" style="left:94px;top:227px;height:15px;line-height:15px;color:#fff;"><span style="font-size:12px">通信可能状態</span></div>
<div class="a" style="left:63px;top:250px;width:12px;height:1px;background:repeating-linear-gradient(90deg,#7f8ea4 0 1px,transparent 1px 2px)"></div>
<svg class="a" style="left:74px;top:242px" width="16" height="16" viewBox="0 0 16 16"><path d="M1 13l10-10 3 3-10 10z" fill="#4f8fd6"/><path d="M12 4l3-3" stroke="#111" stroke-width="1.5"/></svg>
<div class="t" style="left:94px;top:243px;height:15px;line-height:15px;color:#fff;"><span style="font-size:12px">ステート初期化</span></div>
<div class="a" style="left:63px;top:266px;width:12px;height:1px;background:repeating-linear-gradient(90deg,#7f8ea4 0 1px,transparent 1px 2px)"></div>
<svg class="a" style="left:74px;top:258px" width="16" height="16" viewBox="0 0 16 16"><path d="M1 13l10-10 3 3-10 10z" fill="#4f8fd6"/><path d="M12 4l3-3" stroke="#111" stroke-width="1.5"/></svg>
<div class="t" style="left:94px;top:259px;height:15px;line-height:15px;color:#fff;"><span style="font-size:12px">エラーコード格納</span></div>
<div class="a" style="left:63px;top:282px;width:12px;height:1px;background:repeating-linear-gradient(90deg,#7f8ea4 0 1px,transparent 1px 2px)"></div>
<svg class="a" style="left:74px;top:274px" width="16" height="16" viewBox="0 0 16 16"><path d="M1 13l10-10 3 3-10 10z" fill="#4f8fd6"/><path d="M12 4l3-3" stroke="#111" stroke-width="1.5"/></svg>
<div class="t" style="left:94px;top:275px;height:15px;line-height:15px;color:#fff;"><span class="q" style="font-size:12px;--w:6.0px"><i>S</i><i>t</i><i>a</i><i>t</i><i>e</i><i>&nbsp;</i><i class="v">C</i><i>o</i><i>n</i><i>t</i><i>r</i><i>o</i><i>l</i></span></div>
<div class="a" style="left:63px;top:298px;width:12px;height:1px;background:repeating-linear-gradient(90deg,#7f8ea4 0 1px,transparent 1px 2px)"></div>
<svg class="a" style="left:74px;top:290px" width="16" height="16" viewBox="0 0 16 16"><path d="M1 13l10-10 3 3-10 10z" fill="#4f8fd6"/><path d="M12 4l3-3" stroke="#111" stroke-width="1.5"/></svg>
<div class="t" style="left:94px;top:291px;height:15px;line-height:15px;background:#fff;color:#000;padding:0 2px;margin-left:-2px;"><span class="q" style="font-size:12px;--w:6.0px"><i>P</i><i>a</i><i>s</i><i>s</i><i>i</i><i>v</i><i>e</i><i>&nbsp;</i><i class="v">O</i><i>p</i><i>e</i><i>n</i></span><span style="font-size:12px">要求</span></div>
<div class="a" style="left:63px;top:314px;width:12px;height:1px;background:repeating-linear-gradient(90deg,#7f8ea4 0 1px,transparent 1px 2px)"></div>
<svg class="a" style="left:74px;top:306px" width="16" height="16" viewBox="0 0 16 16"><path d="M1 13l10-10 3 3-10 10z" fill="#4f8fd6"/><path d="M12 4l3-3" stroke="#111" stroke-width="1.5"/></svg>
<div class="t" style="left:94px;top:307px;height:15px;line-height:15px;color:#fff;"><span class="q" style="font-size:12px;--w:6.0px"><i class="v">A</i><i>c</i><i>t</i><i>i</i><i>v</i><i>e</i><i>&nbsp;</i><i class="v">O</i><i>p</i><i>e</i><i>n</i></span><span style="font-size:12px">要求</span></div>
<div class="a" style="left:63px;top:330px;width:12px;height:1px;background:repeating-linear-gradient(90deg,#7f8ea4 0 1px,transparent 1px 2px)"></div>
<svg class="a" style="left:74px;top:322px" width="16" height="16" viewBox="0 0 16 16"><path d="M1 13l10-10 3 3-10 10z" fill="#4f8fd6"/><path d="M12 4l3-3" stroke="#111" stroke-width="1.5"/></svg>
<div class="t" style="left:94px;top:323px;height:15px;line-height:15px;color:#fff;"><span class="q" style="font-size:12px;--w:6.0px"><i>*</i><i>*</i><i>*</i><i>&nbsp;</i></span><span style="font-size:12px">送信処理</span></div>
<div class="a" style="left:63px;top:346px;width:12px;height:1px;background:repeating-linear-gradient(90deg,#7f8ea4 0 1px,transparent 1px 2px)"></div>
<svg class="a" style="left:74px;top:338px" width="16" height="16" viewBox="0 0 16 16"><path d="M1 13l10-10 3 3-10 10z" fill="#4f8fd6"/><path d="M12 4l3-3" stroke="#111" stroke-width="1.5"/></svg>
<div class="t" style="left:94px;top:339px;height:15px;line-height:15px;color:#fff;"><span class="q" style="font-size:12px;--w:6.0px"><i>*</i><i>*</i><i>*</i><i>&nbsp;</i></span><span style="font-size:12px">受信処理</span></div>
<div class="a" style="left:63px;top:362px;width:12px;height:1px;background:repeating-linear-gradient(90deg,#7f8ea4 0 1px,transparent 1px 2px)"></div>
<svg class="a" style="left:74px;top:354px" width="16" height="16" viewBox="0 0 16 16"><path d="M1 13l10-10 3 3-10 10z" fill="#4f8fd6"/><path d="M12 4l3-3" stroke="#111" stroke-width="1.5"/></svg>
<div class="t" style="left:94px;top:355px;height:15px;line-height:15px;color:#fff;"><span class="q" style="font-size:12px;--w:6.0px"><i>*</i><i>*</i><i>*</i><i>&nbsp;</i></span><span style="font-size:12px">クローズ処理</span></div>
<div class="a" style="left:63px;top:378px;width:12px;height:1px;background:repeating-linear-gradient(90deg,#7f8ea4 0 1px,transparent 1px 2px)"></div>
<svg class="a" style="left:74px;top:370px" width="16" height="16" viewBox="0 0 16 16"><path d="M1 13l10-10 3 3-10 10z" fill="#4f8fd6"/><path d="M12 4l3-3" stroke="#111" stroke-width="1.5"/></svg>
<div class="t" style="left:94px;top:371px;height:15px;line-height:15px;color:#fff;"><span class="q" style="font-size:12px;--w:6.0px"><i>*</i><i>*</i><i>*</i><i>&nbsp;</i></span><span style="font-size:12px">エラー処理</span></div>
<div class="a" style="left:63px;top:394px;width:12px;height:1px;background:repeating-linear-gradient(90deg,#7f8ea4 0 1px,transparent 1px 2px)"></div>
<svg class="a" style="left:74px;top:386px" width="16" height="16" viewBox="0 0 16 16"><path d="M1 13l10-10 3 3-10 10z" fill="#4f8fd6"/><path d="M12 4l3-3" stroke="#111" stroke-width="1.5"/></svg>
<div class="t" style="left:94px;top:387px;height:15px;line-height:15px;color:#fff;"><span style="font-size:12px">出力リレー更新</span><span class="q" style="font-size:12px;--w:6.0px"><i>&nbsp;</i><i>(</i></span><span style="font-size:12px">高速モード用</span><span class="q" style="font-size:12px;--w:6.0px"><i>)</i></span></div>
<div class="a" style="left:63px;top:410px;width:12px;height:1px;background:repeating-linear-gradient(90deg,#7f8ea4 0 1px,transparent 1px 2px)"></div>
<svg class="a" style="left:74px;top:402px" width="16" height="16" viewBox="0 0 16 16"><path d="M1 13l10-10 3 3-10 10z" fill="#4f8fd6"/><path d="M12 4l3-3" stroke="#111" stroke-width="1.5"/></svg>
<div class="t" style="left:94px;top:403px;height:15px;line-height:15px;color:#fff;"><span style="font-size:12px">送受信可能リレー</span></div>
<div class="a" style="left:63px;top:426px;width:12px;height:1px;background:repeating-linear-gradient(90deg,#7f8ea4 0 1px,transparent 1px 2px)"></div>
<svg class="a" style="left:74px;top:418px" width="16" height="16" viewBox="0 0 16 16"><path d="M1 13l10-10 3 3-10 10z" fill="#4f8fd6"/><path d="M12 4l3-3" stroke="#111" stroke-width="1.5"/></svg>
<div class="t" style="left:94px;top:419px;height:15px;line-height:15px;color:#fff;"><span style="font-size:12px">エラーリレー</span></div>
<div class="a" style="left:63px;top:442px;width:12px;height:1px;background:repeating-linear-gradient(90deg,#7f8ea4 0 1px,transparent 1px 2px)"></div>
<svg class="a" style="left:74px;top:434px" width="16" height="16" viewBox="0 0 16 16"><path d="M1 13l10-10 3 3-10 10z" fill="#4f8fd6"/><path d="M12 4l3-3" stroke="#111" stroke-width="1.5"/></svg>
<div class="t" style="left:94px;top:435px;height:15px;line-height:15px;color:#fff;"><span class="q" style="font-size:12px;--w:6.0px"><i>F</i><i class="v">B</i></span><span style="font-size:12px">出力処理</span></div>
<div class="a" style="left:63px;top:458px;width:12px;height:1px;background:repeating-linear-gradient(90deg,#7f8ea4 0 1px,transparent 1px 2px)"></div>
<svg class="a" style="left:74px;top:450px" width="16" height="16" viewBox="0 0 16 16"><path d="M1 13l10-10 3 3-10 10z" fill="#4f8fd6"/><path d="M12 4l3-3" stroke="#111" stroke-width="1.5"/></svg>
<div class="t" style="left:94px;top:451px;height:15px;line-height:15px;color:#fff;"><span style="font-size:12px">【</span><span class="q" style="font-size:12px;--w:6.0px"><i>S</i><i class="v">B</i><i class="v">N</i><i>&nbsp;</i><i>#</i><i>9</i><i>9</i></span><span style="font-size:12px">】参照先計算　</span><span class="q" style="font-size:12px;--w:6.0px"><i class="v">K</i><i class="v">V</i><i>8</i><i>0</i><i>0</i><i>0</i></span></div>
<div class="a" style="left:63px;top:474px;width:12px;height:1px;background:repeating-linear-gradient(90deg,#7f8ea4 0 1px,transparent 1px 2px)"></div>
<svg class="a" style="left:74px;top:466px" width="16" height="16" viewBox="0 0 16 16"><path d="M1 13l10-10 3 3-10 10z" fill="#4f8fd6"/><path d="M12 4l3-3" stroke="#111" stroke-width="1.5"/></svg>
<div class="t" style="left:94px;top:467px;height:15px;line-height:15px;color:#fff;"><span style="font-size:12px">【</span><span class="q" style="font-size:12px;--w:6.0px"><i>S</i><i class="v">B</i><i class="v">N</i><i>&nbsp;</i><i>#</i><i>9</i><i>9</i></span><span style="font-size:12px">】参照先計算　</span><span class="q" style="font-size:12px;--w:6.0px"><i class="v">K</i><i class="v">V</i><i>7</i><i>5</i><i>0</i><i>0</i></span></div>
<div class="a" style="left:63px;top:490px;width:12px;height:1px;background:repeating-linear-gradient(90deg,#7f8ea4 0 1px,transparent 1px 2px)"></div>
<svg class="a" style="left:74px;top:482px" width="16" height="16" viewBox="0 0 16 16"><path d="M1 13l10-10 3 3-10 10z" fill="#4f8fd6"/><path d="M12 4l3-3" stroke="#111" stroke-width="1.5"/></svg>
<div class="t" style="left:94px;top:483px;height:15px;line-height:15px;color:#fff;"><span style="font-size:12px">【</span><span class="q" style="font-size:12px;--w:6.0px"><i>S</i><i class="v">B</i><i class="v">N</i><i>&nbsp;</i><i>#</i><i>9</i><i>8</i></span><span style="font-size:12px">】参照先計算　</span><span class="q" style="font-size:12px;--w:6.0px"><i class="v">K</i><i class="v">V</i><i>-</i><i>L</i><i>E</i><i>2</i><i>1</i></span></div>
<div class="a" style="left:63px;top:506px;width:12px;height:1px;background:repeating-linear-gradient(90deg,#7f8ea4 0 1px,transparent 1px 2px)"></div>
<svg class="a" style="left:74px;top:498px" width="16" height="16" viewBox="0 0 16 16"><path d="M1 13l10-10 3 3-10 10z" fill="#4f8fd6"/><path d="M12 4l3-3" stroke="#111" stroke-width="1.5"/></svg>
<div class="t" style="left:94px;top:499px;height:15px;line-height:15px;color:#fff;"><span style="font-size:12px">【</span><span class="q" style="font-size:12px;--w:6.0px"><i>S</i><i class="v">B</i><i class="v">N</i><i>&nbsp;</i><i>#</i><i>9</i><i>7</i></span><span style="font-size:12px">】参照先計算　</span><span class="q" style="font-size:12px;--w:6.0px"><i class="v">K</i><i class="v">V</i><i>-</i><i class="v">X</i><i>L</i><i>E</i><i>0</i><i>2</i></span></div>
<div class="a" style="left:63px;top:522px;width:12px;height:1px;background:repeating-linear-gradient(90deg,#7f8ea4 0 1px,transparent 1px 2px)"></div>
<svg class="a" style="left:74px;top:514px" width="16" height="16" viewBox="0 0 16 16"><path d="M1 13l10-10 3 3-10 10z" fill="#4f8fd6"/><path d="M12 4l3-3" stroke="#111" stroke-width="1.5"/></svg>
<div class="t" style="left:94px;top:515px;height:15px;line-height:15px;color:#fff;"><span style="font-size:12px">【</span><span class="q" style="font-size:12px;--w:6.0px"><i>S</i><i class="v">B</i><i class="v">N</i><i>&nbsp;</i><i>#</i><i>3</i></span><span style="font-size:12px">】参照先初期化</span></div>
</div>
<div class="a" style="left:274px;top:116px;width:17px;height:519px;background:#e8e8e8;border-left:1px solid #d8d8d8"></div>
<div class="a" style="left:275px;top:117px;width:16px;height:17px;background:#f4f4f4"></div>
<svg class="a" style="left:278.0px;top:122.0px" width="10" height="8" viewBox="0 0 10 8"><path d="M1 6l4-4 4 4z" fill="#444"/></svg>
<div class="a" style="left:276px;top:279px;width:14px;height:130px;background:linear-gradient(90deg,#eaeaea,#dcdcdc);border:1px solid #9a9a9a;border-radius:2px"></div>
<svg class="a" style="left:279.0px;top:341.0px" width="8" height="6" viewBox="0 0 8 6"><path d="M1 .5h6M1 2.5h6M1 4.5h6" stroke="#666"/></svg>
<div class="a" style="left:291px;top:115px;width:2px;height:520px;background:#33496d"></div>
<div class="a" style="left:291px;top:282px;width:2px;height:353px;background:#434c5c"></div>
<div class="a" style="left:296px;top:93px;width:967px;height:22px;background:#a5a5a5"></div>
<div class="a" style="left:925px;top:93px;width:162px;height:22px;background:#f0f0f0"></div>
<div class="t" style="left:301px;top:97px;line-height:14px"><span class="q" style="font-size:12px;--w:6.0px"><i>S</i><i>o</i><i>c</i><i>k</i><i>e</i><i>t</i><i>_</i><i>L</i><i>i</i><i>t</i><i>e</i></span></div>
<svg class="a" style="left:392.0px;top:98.0px" width="12" height="12" viewBox="0 0 12 12"><path d="M2 2l8 8M10 2l-8 8" stroke="#000" stroke-width="2.2"/></svg>
<div class="t" style="left:416px;top:97px;line-height:14px"><span class="q" style="font-size:12px;--w:6.0px"><i>S</i><i>o</i><i>c</i><i>k</i><i>e</i><i>t</i><i>_</i><i>L</i><i>e</i><i>n</i><i>g</i><i>t</i><i>h</i><i class="v">R</i><i class="v">C</i><i class="v">V</i><i>_</i><i>L</i><i>i</i><i>t</i><i>e</i></span></div>
<svg class="a" style="left:567.0px;top:98.0px" width="12" height="12" viewBox="0 0 12 12"><path d="M2 2l8 8M10 2l-8 8" stroke="#000" stroke-width="2.2"/></svg>
<div class="t" style="left:591px;top:97px;line-height:14px"><span class="q" style="font-size:12px;--w:6.0px"><i>S</i><i>o</i><i>c</i><i>k</i><i>e</i><i>t</i><i>_</i><i>L</i><i>e</i><i>n</i><i>g</i><i>t</i><i>h</i><i class="v">R</i><i class="v">C</i><i class="v">V</i></span></div>
<svg class="a" style="left:712.0px;top:98.0px" width="12" height="12" viewBox="0 0 12 12"><path d="M2 2l8 8M10 2l-8 8" stroke="#000" stroke-width="2.2"/></svg>
<div class="t" style="left:736px;top:97px;line-height:14px"><span class="q" style="font-size:12px;--w:6.0px"><i>S</i><i>o</i><i>c</i><i>k</i><i>e</i><i>t</i><i>_</i><i class="v">D</i><i>e</i><i>l</i><i>i</i><i class="w">m</i><i>i</i><i>t</i><i>e</i><i>r</i><i class="v">R</i><i class="v">C</i><i class="v">V</i><i>_</i><i>L</i><i>i</i><i>t</i><i>e</i></span></div>
<svg class="a" style="left:906.0px;top:98.0px" width="12" height="12" viewBox="0 0 12 12"><path d="M2 2l8 8M10 2l-8 8" stroke="#000" stroke-width="2.2"/></svg>
<div class="t" style="left:929px;top:97px;line-height:14px"><span class="q" style="font-size:12px;--w:6.0px"><i>S</i><i>o</i><i>c</i><i>k</i><i>e</i><i>t</i><i>_</i><i class="v">D</i><i>e</i><i>l</i><i>i</i><i class="w">m</i><i>i</i><i>t</i><i>e</i><i>r</i><i class="v">R</i><i class="v">C</i><i class="v">V</i></span></div>
<svg class="a" style="left:1068.0px;top:98.0px" width="12" height="12" viewBox="0 0 12 12"><path d="M2 2l8 8M10 2l-8 8" stroke="#000" stroke-width="2.2"/></svg>
<div class="t" style="left:1092px;top:97px;line-height:14px"><span class="q" style="font-size:12px;--w:6.0px"><i class="v">C</i><i>y</i><i>l</i><i>i</i><i>n</i><i>d</i><i>e</i><i>r</i><i>_</i><i>2</i><i>_</i><i class="v">C</i><i>o</i><i>i</i><i>l</i><i>(</i></span><span style="font-size:12px">只读</span><span class="q" style="font-size:12px;--w:6.0px"><i>)</i></span></div>
<svg class="a" style="left:1244.0px;top:98.0px" width="12" height="12" viewBox="0 0 12 12"><path d="M2 2l8 8M10 2l-8 8" stroke="#000" stroke-width="2.2"/></svg>
<div class="a" style="left:296px;top:115px;width:973px;height:2px;background:#33496d"></div>
<div class="a" style="left:296px;top:117px;width:53px;height:157px;background:#33496d"></div>
<div class="a" style="left:298px;top:117px;width:50px;height:21px;background:#3d94ea"></div>
<div class="t" style="left:304px;top:120px;font-size:13px;color:#fff">自变量</div>
<div class="a" style="left:298px;top:138px;width:50px;height:22px;background:#f0f0f0"></div>
<div class="t" style="left:310px;top:142px;font-size:13px">标号</div>
<div class="a" style="left:349px;top:117px;width:920px;height:156px;background:#fcfcfc"></div>
<div class="a" style="left:296px;top:273px;width:973px;height:1px;background:#c4c4c4"></div>
<div class="a" style="left:357px;top:126px;width:912px;height:124px;background:#fff;border:1px solid #a0a0a0;border-right:none;overflow:hidden"></div>
<div class="a" style="left:358px;top:127px;width:911px;height:31px;background:#f0f0f0"></div>
<div class="a" style="left:358px;top:158px;width:911px;height:1px;background:#a0a0a0"></div>
<div class="a" style="left:358px;top:159px;width:49px;height:90px;background:#f0f0f0"></div>
<div class="a" style="left:407px;top:127px;width:1px;height:122px;background:#c8c8c8"></div>
<div class="a" style="left:497px;top:127px;width:1px;height:122px;background:#c8c8c8"></div>
<div class="a" style="left:617px;top:127px;width:1px;height:122px;background:#c8c8c8"></div>
<div class="a" style="left:747px;top:127px;width:1px;height:122px;background:#c8c8c8"></div>
<div class="a" style="left:897px;top:127px;width:1px;height:122px;background:#c8c8c8"></div>
<div class="a" style="left:947px;top:127px;width:1px;height:122px;background:#c8c8c8"></div>
<div class="a" style="left:1117px;top:142px;width:1px;height:107px;background:#c8c8c8"></div>
<div class="a" style="left:947px;top:142px;width:322px;height:1px;background:#a0a0a0"></div>
<div class="t" style="left:357px;width:50px;text-align:center;top:136px;font-size:12.5px"><span class="q" style="font-size:12px;--w:6.0px"><i class="v">N</i><i>o</i><i>.</i></span></div>
<div class="t" style="left:407px;width:90px;text-align:center;top:136px;font-size:12.5px"><span style="font-size:12.5px">参数类型</span></div>
<div class="t" style="left:497px;width:120px;text-align:center;top:136px;font-size:12.5px"><span style="font-size:12.5px">参数名</span></div>
<div class="t" style="left:617px;width:130px;text-align:center;top:136px;font-size:12.5px"><span style="font-size:12.5px">显示格式</span><span class="q" style="font-size:12px;--w:6.0px"><i>/</i></span><span style="font-size:12.5px">单元类型</span></div>
<div class="t" style="left:747px;width:150px;text-align:center;top:136px;font-size:12.5px"><span style="font-size:12.5px">初始值</span></div>
<div class="t" style="left:897px;width:50px;text-align:center;top:136px;font-size:12.5px"><span style="font-size:12.5px">非公开</span></div>
<div class="t" style="left:951px;top:129px;font-size:12.5px">注释</div>
<div class="t" style="left:951px;top:145px;font-size:12.5px"><span style="font-size:12.5px">注释</span><span class="q" style="font-size:12px;--w:6.0px"><i>&nbsp;</i><i>1</i></span></div>
<div class="t" style="left:1121px;top:145px;font-size:12.5px"><span style="font-size:12.5px">注释</span><span class="q" style="font-size:12px;--w:6.0px"><i>&nbsp;</i><i>2</i></span></div>
<div class="a" style="left:748px;top:159px;width:149px;height:15px;background:#d9d9d9"></div>
<div class="a" style="left:898px;top:159px;width:49px;height:15px;background:#d9d9d9"></div>
<div class="a" style="left:498px;top:159px;width:119px;height:15px;background:#d9d9d9"></div>
<div class="a" style="left:481px;top:159px;width:16px;height:15px;background:#e6e6e6"></div>
<svg class="a" style="left:485.0px;top:163.0px" width="8" height="6" viewBox="0 0 8 6"><path d="M1 1h6L4 5z" fill="#777"/></svg>
<div class="t" style="left:361px;top:159px;line-height:15px"><span class="q" style="font-size:12px;--w:6.0px"><i>1</i></span></div>
<div class="t" style="left:410px;top:159px;line-height:15px"><span style="font-size:12px">单元</span></div>
<div class="t" style="left:500px;top:159px;line-height:15px"><span class="q" style="font-size:12px;--w:6.0px"><i class="v">U</i><i class="v">R</i><i>/</i><i class="v">U</i><i class="w">M</i><i>/</i><i class="v">U</i><i class="v">V</i><i class="v">O</i></span></div>
<div class="t" style="left:620px;top:159px;line-height:15px"><span class="q" style="font-size:12px;--w:6.0px"><i>-</i><i>-</i><i>-</i></span></div>
<div class="t" style="left:950px;top:159px;line-height:15px"><span style="display:inline-block;width:12px;font-size:17px;line-height:10px;vertical-align:-4px;padding-left:1px">*</span><span style="font-size:12px">单元编号</span></div>
<div class="a" style="left:916px;top:161px;width:11px;height:11px;background:#fff;border:1px solid #b8b8b8"></div>
<div class="a" style="left:358px;top:174px;width:911px;height:1px;background:#e4e4e4"></div>
<div class="t" style="left:361px;top:175px;line-height:15px"><span class="q" style="font-size:12px;--w:6.0px"><i>2</i></span></div>
<div class="t" style="left:410px;top:175px;line-height:15px"><span class="q" style="font-size:12px;--w:6.0px"><i>I</i><i class="v">N</i></span></div>
<div class="t" style="left:500px;top:175px;line-height:15px"><span class="q" style="font-size:12px;--w:6.0px"><i>S</i><i>o</i><i>c</i><i>k</i><i>e</i><i>t</i><i class="v">N</i><i>o</i></span></div>
<div class="t" style="left:620px;top:175px;line-height:15px"><span class="q" style="font-size:12px;--w:6.0px"><i>1</i><i>&nbsp;</i></span><span style="font-size:12px">字无符号整数</span></div>
<div class="t" style="left:950px;top:175px;line-height:15px"><span style="display:inline-block;width:12px;font-size:17px;line-height:10px;vertical-align:-4px;padding-left:1px">*</span><span style="font-size:12px">套接字号</span></div>
<div class="a" style="left:916px;top:177px;width:11px;height:11px;background:#fff;border:1px solid #b8b8b8"></div>
<div class="a" style="left:358px;top:190px;width:911px;height:1px;background:#e4e4e4"></div>
<div class="a" style="left:748px;top:191px;width:149px;height:15px;background:#d9d9d9"></div>
<div class="a" style="left:898px;top:191px;width:49px;height:15px;background:#d9d9d9"></div>
<div class="t" style="left:361px;top:191px;line-height:15px"><span class="q" style="font-size:12px;--w:6.0px"><i>3</i></span></div>
<div class="t" style="left:410px;top:191px;line-height:15px"><span class="q" style="font-size:12px;--w:6.0px"><i>I</i><i class="v">N</i><i>-</i><i class="v">O</i><i class="v">U</i><i>T</i></span></div>
<div class="t" style="left:500px;top:191px;line-height:15px"><span style="font-size:12px">网络设置</span></div>
<div class="t" style="left:620px;top:191px;line-height:15px"><span class="q" style="font-size:12px;--w:6.0px"><i>1</i><i>&nbsp;</i></span><span style="font-size:12px">字无符号整数</span></div>
<div class="t" style="left:950px;top:191px;line-height:15px"><span style="font-size:12px">网络设定相关</span></div>
<div class="a" style="left:916px;top:193px;width:11px;height:11px;background:#fff;border:1px solid #b8b8b8"></div>
<div class="a" style="left:358px;top:206px;width:911px;height:1px;background:#e4e4e4"></div>
<div class="t" style="left:361px;top:207px;line-height:15px"><span class="q" style="font-size:12px;--w:6.0px"><i>4</i></span></div>
<div class="t" style="left:410px;top:207px;line-height:15px"><span class="q" style="font-size:12px;--w:6.0px"><i>I</i><i class="v">N</i></span></div>
<div class="t" style="left:500px;top:207px;line-height:15px"><span style="font-size:12px">发送</span></div>
<div class="t" style="left:620px;top:207px;line-height:15px"><span style="font-size:12px">位</span></div>
<div class="t" style="left:950px;top:207px;line-height:15px"><span style="display:inline-block;width:12px;font-size:17px;line-height:10px;vertical-align:-4px;padding-left:1px">*</span><span style="font-size:12px">发送请求</span></div>
<div class="a" style="left:916px;top:209px;width:11px;height:11px;background:#fff;border:1px solid #b8b8b8"></div>
<div class="a" style="left:358px;top:222px;width:911px;height:1px;background:#e4e4e4"></div>
<div class="a" style="left:748px;top:223px;width:149px;height:15px;background:#d9d9d9"></div>
<div class="a" style="left:898px;top:223px;width:49px;height:15px;background:#d9d9d9"></div>
<div class="t" style="left:361px;top:223px;line-height:15px"><span class="q" style="font-size:12px;--w:6.0px"><i>5</i></span></div>
<div class="t" style="left:410px;top:223px;line-height:15px"><span class="q" style="font-size:12px;--w:6.0px"><i>I</i><i class="v">N</i><i>-</i><i class="v">O</i><i class="v">U</i><i>T</i></span></div>
<div class="t" style="left:500px;top:223px;line-height:15px"><span style="font-size:12px">发送首地址</span></div>
<div class="t" style="left:620px;top:223px;line-height:15px"><span class="q" style="font-size:12px;--w:6.0px"><i>1</i><i>&nbsp;</i></span><span style="font-size:12px">字无符号整数</span></div>
<div class="t" style="left:950px;top:223px;line-height:15px"><span style="display:inline-block;width:12px;font-size:17px;line-height:10px;vertical-align:-4px;padding-left:1px">*</span><span style="font-size:12px">发送数据首地址</span></div>
<div class="a" style="left:916px;top:225px;width:11px;height:11px;background:#fff;border:1px solid #b8b8b8"></div>
<div class="a" style="left:358px;top:238px;width:911px;height:1px;background:#e4e4e4"></div>
<div class="t" style="left:361px;top:239px;line-height:15px"><span class="q" style="font-size:12px;--w:6.0px"><i>6</i></span></div>
<div class="t" style="left:410px;top:239px;line-height:15px"><span class="q" style="font-size:12px;--w:6.0px"><i>I</i><i class="v">N</i></span></div>
<div class="t" style="left:500px;top:239px;line-height:15px"><span style="font-size:12px">发送长度</span></div>
<div class="t" style="left:620px;top:239px;line-height:15px"><span class="q" style="font-size:12px;--w:6.0px"><i>1</i><i>&nbsp;</i></span><span style="font-size:12px">字无符号整数</span></div>
<div class="t" style="left:950px;top:239px;line-height:15px"><span style="font-size:12px">二进制数据长度</span><span class="q" style="font-size:12px;--w:6.0px"><i class="v">B</i><i>y</i><i>t</i><i>e</i></span></div>
<div class="a" style="left:916px;top:241px;width:11px;height:11px;background:#fff;border:1px solid #b8b8b8"></div>
<div class="a" style="left:357px;top:249px;width:912px;height:1px;background:#a0a0a0"></div>
<div class="a" style="left:357px;top:250px;width:912px;height:17px;background:#f2f2f2"></div>
<div class="a" style="left:349px;top:250px;width:8px;height:23px;background:#fcfcfc"></div>
<div class="a" style="left:357px;top:267px;width:912px;height:6px;background:#fcfcfc"></div>
<div class="a" style="left:357px;top:251px;width:17px;height:16px;background:#e6e6e6"></div>
<svg class="a" style="left:362.0px;top:253.0px" width="8" height="10" viewBox="0 0 8 10"><path d="M5 1L1 5l4 4z" fill="#444"/></svg>
<div class="a" style="left:375px;top:252px;width:79px;height:14px;background:linear-gradient(#f6f6f6,#dcdcdc);border:1px solid #9a9a9a;border-radius:2px"></div>
<svg class="a" style="left:411.0px;top:255.0px" width="6" height="8" viewBox="0 0 6 8"><path d="M.5 1v6M2.5 1v6M4.5 1v6" stroke="#666"/></svg>
<div class="a" style="left:296px;top:274px;width:973px;height:8px;background:#f0f0f0"></div>
<div class="a" style="left:296px;top:282px;width:973px;height:353px;background:#fff"></div>
<div class="a" style="left:296px;top:297px;width:81px;height:338px;background:#d2e5fb"></div>
<div class="a" style="left:296px;top:297px;width:1px;height:338px;background:#9a9ea4"></div>
<div class="a" style="left:350px;top:297px;width:1px;height:338px;background:#9a9ea4"></div>
<div class="a" style="left:296px;top:297px;width:2px;height:213px;background:#6a6e74"></div>
<div class="a" style="left:350px;top:297px;width:2px;height:213px;background:#6a6e74"></div>
<div class="a" style="left:296px;top:510px;width:81px;height:1px;background:#8a9098"></div>
<div class="a" style="left:376px;top:297px;width:2px;height:338px;background:#000"></div>
<div class="t" style="left:297px;width:53px;text-align:center;top:387px;font-family:'Liberation Serif',serif;font-size:13px;color:#222">00157</div>
<div class="t" style="left:297px;width:53px;text-align:center;top:580px;font-family:'Liberation Serif',serif;font-size:13px;color:#222">00158</div>
<div class="a" style="left:469px;top:297px;width:1px;height:338px;background:repeating-linear-gradient(#c8c8c8 0 3px,transparent 3px 6px)"></div>
<div class="a" style="left:562px;top:297px;width:1px;height:338px;background:repeating-linear-gradient(#c8c8c8 0 3px,transparent 3px 6px)"></div>
<div class="a" style="left:653px;top:297px;width:1px;height:338px;background:repeating-linear-gradient(#c8c8c8 0 3px,transparent 3px 6px)"></div>
<div class="a" style="left:745px;top:297px;width:1px;height:338px;background:repeating-linear-gradient(#c8c8c8 0 3px,transparent 3px 6px)"></div>
<div class="a" style="left:378px;top:510px;width:891px;height:1px;background:repeating-linear-gradient(90deg,#c8c8c8 0 3px,transparent 3px 6px)"></div>
<div class="a" style="left:561px;top:297px;width:93px;height:213px;border:2px solid #b4e6a0;border-top:none"></div>
<div class="a" style="left:394px;top:309px;width:1px;height:20px;background:#1e5a1e"></div>
<div class="a" style="left:454px;top:309px;width:1px;height:20px;background:#1e5a1e"></div>
<div class="t" style="left:401px;top:314px;line-height:12px;color:#2a6a2a"><span class="q" style="font-size:12.5px;--w:6.4px"><i>=</i><i>.</i><i class="v">D</i></span></div>
<div class="t" style="left:377px;width:93px;text-align:center;top:295px;line-height:12px;color:#222"><span class="q" style="font-size:12.5px;--w:6.4px"><i>#</i><i>1</i><i>0</i></span></div>
<div class="t" style="left:377px;width:93px;text-align:center;top:330px;line-height:12px;color:#8b3030"><span class="q" style="font-size:12.5px;--w:6.4px"><i>S</i><i>t</i><i>a</i><i>t</i><i>e</i></span></div>
<div class="a" style="left:486px;top:309px;width:1px;height:20px;background:#1e5a1e"></div>
<div class="a" style="left:546px;top:309px;width:1px;height:20px;background:#1e5a1e"></div>
<div class="t" style="left:493px;top:314px;line-height:12px;color:#2a6a2a"><span class="q" style="font-size:12.5px;--w:6.4px"><i>=</i><i>.</i><i class="v">D</i></span></div>
<div class="t" style="left:469px;width:93px;text-align:center;top:295px;line-height:12px;color:#222"><span class="q" style="font-size:12.5px;--w:6.4px"><i>#</i><i>1</i><i>0</i></span></div>
<div class="t" style="left:469px;width:93px;text-align:center;top:330px;line-height:12px;color:#8b3030"><span class="q" style="font-size:12.5px;--w:6.4px"><i>S</i><i class="v">N</i><i class="v">D</i><i>_</i><i>S</i><i>t</i><i>a</i><i>t</i><i>e</i></span></div>
<div class="a" style="left:378px;top:319px;width:17px;height:1px;background:#1e5a1e"></div>
<div class="a" style="left:455px;top:319px;width:32px;height:1px;background:#1e5a1e"></div>
<div class="a" style="left:547px;top:319px;width:15px;height:1px;background:#1e5a1e"></div>
<div class="a" style="left:562px;top:319px;width:191px;height:1px;background:#000"></div>
<div class="a" style="left:394px;top:542px;width:1px;height:20px;background:#1e5a1e"></div>
<div class="a" style="left:454px;top:542px;width:1px;height:20px;background:#1e5a1e"></div>
<div class="t" style="left:401px;top:547px;line-height:12px;color:#2a6a2a"><span class="q" style="font-size:12.5px;--w:6.4px"><i>=</i><i>.</i><i class="v">D</i></span></div>
<div class="t" style="left:377px;width:93px;text-align:center;top:528px;line-height:12px;color:#222"><span class="q" style="font-size:12.5px;--w:6.4px"><i>#</i><i>1</i><i>0</i></span></div>
<div class="t" style="left:377px;width:93px;text-align:center;top:563px;line-height:12px;color:#8b3030"><span class="q" style="font-size:12.5px;--w:6.4px"><i>S</i><i>t</i><i>a</i><i>t</i><i>e</i></span></div>
<div class="a" style="left:486px;top:542px;width:1px;height:20px;background:#1e5a1e"></div>
<div class="a" style="left:546px;top:542px;width:1px;height:20px;background:#1e5a1e"></div>
<div class="t" style="left:493px;top:547px;line-height:12px;color:#2a6a2a"><span class="q" style="font-size:12.5px;--w:6.4px"><i>=</i><i>.</i><i class="v">D</i></span></div>
<div class="t" style="left:469px;width:93px;text-align:center;top:528px;line-height:12px;color:#222"><span class="q" style="font-size:12.5px;--w:6.4px"><i>#</i><i>2</i><i>0</i></span></div>
<div class="t" style="left:469px;width:93px;text-align:center;top:563px;line-height:12px;color:#8b3030"><span class="q" style="font-size:12.5px;--w:6.4px"><i>S</i><i class="v">N</i><i class="v">D</i><i>_</i><i>S</i><i>t</i><i>a</i><i>t</i><i>e</i></span></div>
<div class="a" style="left:378px;top:552px;width:17px;height:1px;background:#1e5a1e"></div>
<div class="a" style="left:455px;top:552px;width:32px;height:1px;background:#1e5a1e"></div>
<div class="a" style="left:547px;top:552px;width:15px;height:1px;background:#1e5a1e"></div>
<div class="a" style="left:562px;top:552px;width:191px;height:1px;background:#000"></div>
<div class="a" style="left:753px;top:297px;width:530px;height:198px;background:#fdf5fd;border:1px solid #1e4a1e;border-right:none;border-top:none"></div>
<div class="a" style="left:753px;top:528px;width:530px;height:120px;background:#fdf5fd;border:1px solid #1e4a1e;border-right:none"></div>
<div class="t" style="left:761px;top:300.0px;line-height:14px;white-space:pre"><span style="color:#3a3aaa"><span class="q" style="font-size:13.5px;--w:7.0px"><i>i</i><i>f</i><i>&nbsp;</i></span></span><span style="color:#8b2e3a"><span class="q" style="font-size:13.5px;--w:7.0px"><i class="w">w</i><i>S</i><i>z</i><i>S</i><i>n</i><i>d</i><i class="v">B</i><i>y</i><i>t</i><i>e</i><i>s</i><i>_</i><i>L</i><i>e</i><i>f</i><i>t</i></span></span><span style="color:#333"><span class="q" style="font-size:13.5px;--w:7.0px"><i>&nbsp;</i><i>&gt;</i><i>&nbsp;</i><i>1</i><i>4</i><i>7</i><i>2</i><i>&nbsp;</i></span></span><span style="color:#3a3aaa"><span class="q" style="font-size:13.5px;--w:7.0px"><i>t</i><i>h</i><i>e</i><i>n</i></span></span></div>
<div class="t" style="left:761px;top:316.5px;line-height:14px;white-space:pre"><span style="color:#333"><span class="q" style="font-size:13.5px;--w:7.0px"><i>&nbsp;</i><i>&nbsp;</i><i>&nbsp;</i><i>&nbsp;</i></span></span><span style="color:#8b2e3a"><span class="q" style="font-size:13.5px;--w:7.0px"><i class="w">w</i><i>S</i><i>z</i><i>S</i><i>n</i><i>d</i><i class="v">B</i><i>y</i><i>t</i><i>e</i><i>s</i><i>_</i><i class="v">N</i><i>o</i><i class="w">w</i></span></span><span style="color:#333"><span class="q" style="font-size:13.5px;--w:7.0px"><i>&nbsp;</i><i>=</i><i>&nbsp;</i><i>1</i><i>4</i><i>7</i><i>2</i></span></span></div>
<div class="t" style="left:761px;top:333.0px;line-height:14px;white-space:pre"><span style="color:#333"><span class="q" style="font-size:13.5px;--w:7.0px"><i>&nbsp;</i><i>&nbsp;</i><i>&nbsp;</i><i>&nbsp;</i></span></span><span style="color:#8b2e3a"><span class="q" style="font-size:13.5px;--w:7.0px"><i>S</i><i>n</i><i>d</i><i class="v">C</i><i>o</i><i>n</i><i>t</i><i>i</i><i>n</i><i>u</i><i>e</i></span></span><span style="color:#333"><span class="q" style="font-size:13.5px;--w:7.0px"><i>&nbsp;</i><i>=</i><i>&nbsp;</i></span></span><span style="color:#3a3aaa"><span class="q" style="font-size:13.5px;--w:7.0px"><i class="v">O</i><i class="v">N</i></span></span></div>
<div class="t" style="left:761px;top:349.5px;line-height:14px;white-space:pre"><span style="color:#3a3aaa"><span class="q" style="font-size:13.5px;--w:7.0px"><i>e</i><i>l</i><i>s</i><i>e</i></span></span></div>
<div class="t" style="left:761px;top:366.0px;line-height:14px;white-space:pre"><span style="color:#333"><span class="q" style="font-size:13.5px;--w:7.0px"><i>&nbsp;</i><i>&nbsp;</i><i>&nbsp;</i><i>&nbsp;</i></span></span><span style="color:#8b2e3a"><span class="q" style="font-size:13.5px;--w:7.0px"><i class="w">w</i><i>S</i><i>z</i><i>S</i><i>n</i><i>d</i><i class="v">B</i><i>y</i><i>t</i><i>e</i><i>s</i><i>_</i><i class="v">N</i><i>o</i><i class="w">w</i></span></span><span style="color:#333"><span class="q" style="font-size:13.5px;--w:7.0px"><i>&nbsp;</i><i>=</i><i>&nbsp;</i></span></span><span style="color:#8b2e3a"><span class="q" style="font-size:13.5px;--w:7.0px"><i class="w">w</i><i>S</i><i>z</i><i>S</i><i>n</i><i>d</i><i class="v">B</i><i>y</i><i>t</i><i>e</i><i>s</i><i>_</i><i>L</i><i>e</i><i>f</i><i>t</i></span></span></div>
<div class="t" style="left:761px;top:382.5px;line-height:14px;white-space:pre"><span style="color:#333"><span class="q" style="font-size:13.5px;--w:7.0px"><i>&nbsp;</i><i>&nbsp;</i><i>&nbsp;</i><i>&nbsp;</i></span></span><span style="color:#8b2e3a"><span class="q" style="font-size:13.5px;--w:7.0px"><i>S</i><i>n</i><i>d</i><i class="v">C</i><i>o</i><i>n</i><i>t</i><i>i</i><i>n</i><i>u</i><i>e</i></span></span><span style="color:#333"><span class="q" style="font-size:13.5px;--w:7.0px"><i>&nbsp;</i><i>=</i><i>&nbsp;</i></span></span><span style="color:#3a3aaa"><span class="q" style="font-size:13.5px;--w:7.0px"><i class="v">O</i><i>F</i><i>F</i></span></span></div>
<div class="t" style="left:761px;top:399.0px;line-height:14px;white-space:pre"><span style="color:#3a3aaa"><span class="q" style="font-size:13.5px;--w:7.0px"><i>e</i><i>n</i><i>d</i><i>&nbsp;</i><i>i</i><i>f</i></span></span></div>
<div class="t" style="left:761px;top:415.5px;line-height:14px;white-space:pre"><span style="color:#8b2e3a"><span class="q" style="font-size:13.5px;--w:7.0px"><i class="w">w</i><i>S</i><i>z</i><i>S</i><i>n</i><i>d</i><i class="w">W</i><i>o</i><i>r</i><i>d</i><i>s</i><i>_</i><i>L</i><i>e</i><i>f</i><i>t</i></span></span><span style="color:#333"><span class="q" style="font-size:13.5px;--w:7.0px"><i>&nbsp;</i><i>=</i><i>&nbsp;</i></span></span><span style="color:#3a3aaa"><span class="q" style="font-size:13.5px;--w:7.0px"><i>S</i><i class="v">R</i><i class="v">A</i></span></span><span style="color:#333"><span class="q" style="font-size:13.5px;--w:7.0px"><i>(</i></span></span><span style="color:#8b2e3a"><span class="q" style="font-size:13.5px;--w:7.0px"><i class="w">w</i><i>S</i><i>z</i><i>S</i><i>n</i><i>d</i><i class="v">B</i><i>y</i><i>t</i><i>e</i><i>s</i><i>_</i><i>L</i><i>e</i><i>f</i><i>t</i></span></span><span style="color:#333"><span class="q" style="font-size:13.5px;--w:7.0px"><i>,</i><i>&nbsp;</i><i>1</i><i>)</i><i>&nbsp;</i><i>+</i><i>&nbsp;</i><i>1</i></span></span></div>
<div class="t" style="left:761px;top:432.0px;line-height:14px;white-space:pre"><span style="color:#8b2e3a"><span class="q" style="font-size:13.5px;--w:7.0px"><i class="w">w</i><i>S</i><i>z</i><i>S</i><i>n</i><i>d</i><i class="w">W</i><i>o</i><i>r</i><i>d</i><i>s</i><i>_</i><i class="v">N</i><i>o</i><i class="w">w</i></span></span><span style="color:#333"><span class="q" style="font-size:13.5px;--w:7.0px"><i>&nbsp;</i><i>=</i><i>&nbsp;</i></span></span><span style="color:#3a3aaa"><span class="q" style="font-size:13.5px;--w:7.0px"><i>S</i><i class="v">R</i><i class="v">A</i></span></span><span style="color:#333"><span class="q" style="font-size:13.5px;--w:7.0px"><i>(</i></span></span><span style="color:#8b2e3a"><span class="q" style="font-size:13.5px;--w:7.0px"><i class="w">w</i><i>S</i><i>z</i><i>S</i><i>n</i><i>d</i><i class="v">B</i><i>y</i><i>t</i><i>e</i><i>s</i><i>_</i><i class="v">N</i><i>o</i><i class="w">w</i></span></span><span style="color:#333"><span class="q" style="font-size:13.5px;--w:7.0px"><i>,</i><i>&nbsp;</i><i>1</i><i>)</i><i>&nbsp;</i><i>+</i><i>&nbsp;</i><i>1</i></span></span></div>
<div class="t" style="left:761px;top:465.0px;line-height:14px;white-space:pre"><span style="color:#8b2e3a"><span class="q" style="font-size:13.5px;--w:7.0px"><i>S</i><i class="v">N</i><i class="v">D</i><i>_</i><i>S</i><i>t</i><i>a</i><i>t</i><i>e</i></span></span><span style="color:#333"><span class="q" style="font-size:13.5px;--w:7.0px"><i>&nbsp;</i><i>=</i><i>&nbsp;</i><i>2</i><i>0</i></span></span></div>
<div class="t" style="left:761px;top:533.0px;line-height:14px;white-space:pre"><span style="color:#3f9f3f"><span class="q" style="font-size:13.5px;--w:7.0px"><i>'</i></span><span style="font-size:14px">送信データセット</span></span></div>
<div class="t" style="left:761px;top:549.4px;line-height:14px;white-space:pre"><span style="color:#3a3aaa"><span class="q" style="font-size:13.5px;--w:7.0px"><i class="v">U</i><i class="w">W</i><i class="v">R</i><i>I</i><i>T</i></span></span><span style="color:#333"><span class="q" style="font-size:13.5px;--w:7.0px"><i>(</i><i>&nbsp;</i><i class="v">U</i><i class="v">V</i><i>0</i><i>&nbsp;</i><i>,</i><i>&nbsp;</i></span></span><span style="color:#8b2e3a"><span class="q" style="font-size:13.5px;--w:7.0px"><i>S</i><i>e</i><i>n</i><i>d</i><i class="v">D</i><i>a</i><i>t</i><i>a</i><i>T</i><i>o</i><i>p</i></span></span><span style="color:#333"><span class="q" style="font-size:13.5px;--w:7.0px"><i>&nbsp;</i><i>,</i><i>&nbsp;</i></span></span><span style="color:#8b2e3a"><span class="q" style="font-size:13.5px;--w:7.0px"><i class="w">w</i><i>S</i><i>z</i><i>S</i><i>n</i><i>d</i><i class="v">B</i><i>y</i><i>t</i><i>e</i><i>s</i><i>_</i><i class="v">N</i><i>o</i><i class="w">w</i></span></span><span style="color:#333"><span class="q" style="font-size:13.5px;--w:7.0px"><i>&nbsp;</i><i>,</i><i>&nbsp;</i><i>1</i><i>&nbsp;</i><i>)</i></span></span></div>
<div class="t" style="left:761px;top:565.8px;line-height:14px;white-space:pre"><span style="color:#3a3aaa"><span class="q" style="font-size:13.5px;--w:7.0px"><i class="v">U</i><i class="w">W</i><i class="v">R</i><i>I</i><i>T</i></span></span><span style="color:#333"><span class="q" style="font-size:13.5px;--w:7.0px"><i>(</i><i>&nbsp;</i><i class="v">U</i><i class="v">V</i><i>0</i><i>&nbsp;</i><i>,</i><i>&nbsp;</i></span></span><span style="color:#8b2e3a"><span class="q" style="font-size:13.5px;--w:7.0px"><i>S</i><i>e</i><i>n</i><i>d</i><i class="v">D</i><i>a</i><i>t</i><i>a</i><i>T</i><i>o</i><i>p</i></span></span><span style="color:#333"><span class="q" style="font-size:13.5px;--w:7.0px"><i>&nbsp;</i><i>+</i><i>&nbsp;</i><i>1</i><i>&nbsp;</i><i>,</i><i>&nbsp;</i></span></span><span style="color:#8a2be2"><span style="font-size:14px">发送首地址</span></span><span style="color:#8b2e3a"><span class="q" style="font-size:13.5px;--w:7.0px"><i>:</i><i>(</i><i class="w">w</i><i>S</i><i>z</i><i>S</i><i>n</i><i>d</i><i class="w">W</i><i>o</i><i>r</i><i>d</i><i>s</i><i>-</i><i class="w">w</i><i>S</i><i>z</i><i>S</i><i>n</i><i>d</i><i class="w">W</i><i>o</i><i>r</i><i>d</i><i>s</i><i>_</i><i>L</i><i>e</i><i>f</i><i>t</i><i>)</i></span></span><span style="color:#333"><span class="q" style="font-size:13.5px;--w:7.0px"><i>,</i><i>&nbsp;</i><i>1</i><i>&nbsp;</i><i>)</i></span></span></div>
<div class="t" style="left:761px;top:598.6px;line-height:14px;white-space:pre"><span style="color:#3f9f3f"><span class="q" style="font-size:13.5px;--w:7.0px"><i>'</i></span><span style="font-size:14px">处理管理</span></span></div>
<div class="t" style="left:761px;top:615.0px;line-height:14px;white-space:pre"><span style="color:#3a3aaa"><span class="q" style="font-size:13.5px;--w:7.0px"><i>I</i><i class="v">N</i><i class="v">C</i></span></span><span style="color:#333"><span class="q" style="font-size:13.5px;--w:7.0px"><i>(</i></span></span><span style="color:#8b2e3a"><span class="q" style="font-size:13.5px;--w:7.0px"><i>S</i><i class="v">N</i><i class="v">D</i><i>_</i><i>S</i><i>t</i><i>a</i><i>t</i><i>e</i></span></span><span style="color:#333"><span class="q" style="font-size:13.5px;--w:7.0px"><i>)</i></span></span></div>
<div class="a" style="left:296px;top:282px;width:973px;height:16px;background:#d2e5fb;border-top:1px solid #9aa5b0;border-bottom:1px solid #8a98a8"></div>
<div class="a" style="left:377px;top:283px;width:1px;height:15px;background:#8a98a8"></div>
<div class="t" style="left:377px;width:92px;text-align:center;top:284px;font-family:'Liberation Serif',serif;font-size:13px;color:#222">1</div>
<div class="a" style="left:469px;top:283px;width:1px;height:15px;background:#8a98a8"></div>
<div class="t" style="left:469px;width:93px;text-align:center;top:284px;font-family:'Liberation Serif',serif;font-size:13px;color:#222">2</div>
<div class="a" style="left:562px;top:283px;width:1px;height:15px;background:#8a98a8"></div>
<div class="t" style="left:562px;width:91px;text-align:center;top:284px;font-family:'Liberation Serif',serif;font-size:13px;color:#222">3</div>
<div class="a" style="left:653px;top:283px;width:1px;height:15px;background:#8a98a8"></div>
<div class="t" style="left:653px;width:92px;text-align:center;top:284px;font-family:'Liberation Serif',serif;font-size:13px;color:#222">4</div>
<div class="a" style="left:745px;top:283px;width:1px;height:15px;background:#8a98a8"></div>
<div class="t" style="left:745px;width:92px;text-align:center;top:284px;font-family:'Liberation Serif',serif;font-size:13px;color:#222">5</div>
<div class="a" style="left:837px;top:283px;width:1px;height:15px;background:#8a98a8"></div>
<div class="t" style="left:837px;width:92px;text-align:center;top:284px;font-family:'Liberation Serif',serif;font-size:13px;color:#222">6</div>
<div class="a" style="left:929px;top:283px;width:1px;height:15px;background:#8a98a8"></div>
<div class="t" style="left:929px;width:92px;text-align:center;top:284px;font-family:'Liberation Serif',serif;font-size:13px;color:#222">7</div>
<div class="a" style="left:1021px;top:283px;width:1px;height:15px;background:#8a98a8"></div>
<div class="t" style="left:1021px;width:92px;text-align:center;top:284px;font-family:'Liberation Serif',serif;font-size:13px;color:#222">8</div>
<div class="a" style="left:1113px;top:283px;width:1px;height:15px;background:#8a98a8"></div>
<div class="t" style="left:1113px;width:92px;text-align:center;top:284px;font-family:'Liberation Serif',serif;font-size:13px;color:#222">9</div>
<div class="a" style="left:1205px;top:283px;width:1px;height:15px;background:#8a98a8"></div>
<div class="t" style="left:1205px;width:92px;text-align:center;top:284px;font-family:'Liberation Serif',serif;font-size:13px;color:#222">10</div>
<div class="a" style="left:350px;top:283px;width:1px;height:15px;background:#8a98a8"></div>
<div class="a" style="left:562px;top:283px;width:91px;height:15px;border:1px solid #606870;border-bottom:none"></div>
</body></html>
